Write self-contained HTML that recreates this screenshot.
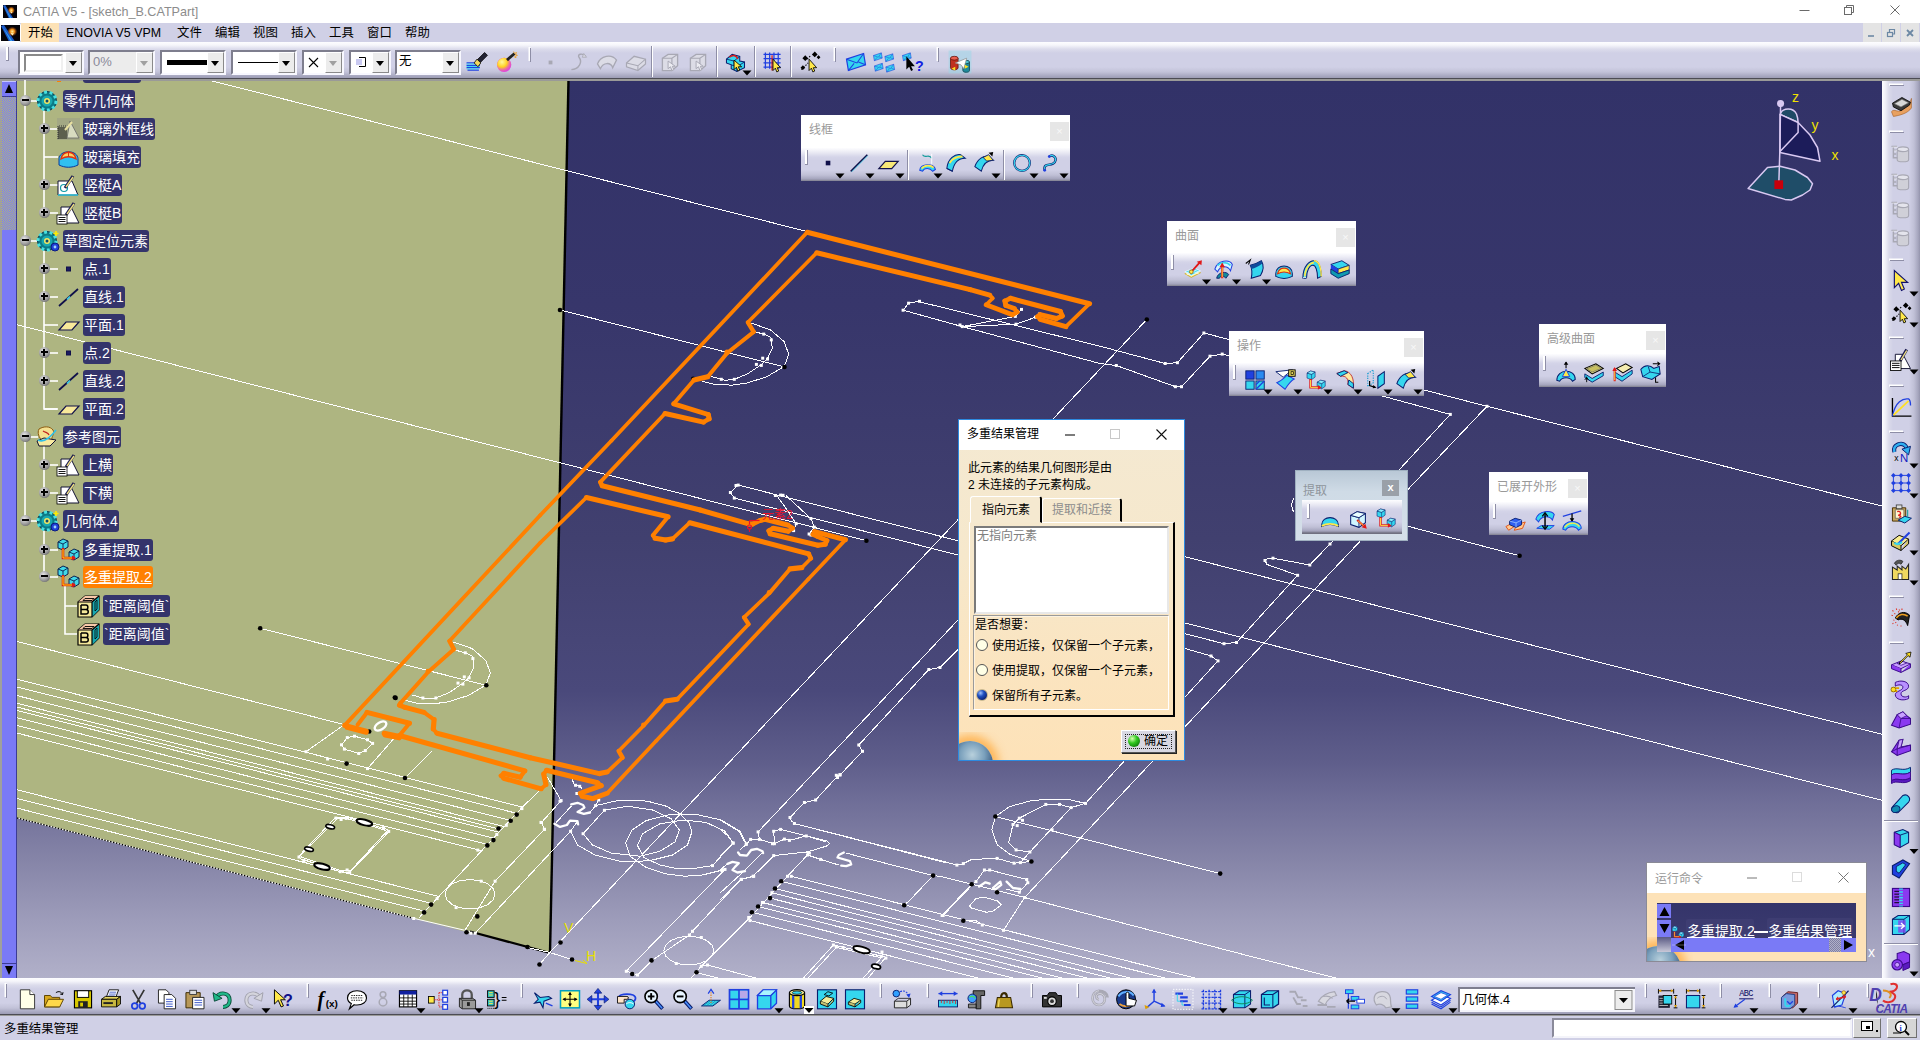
<!DOCTYPE html>
<html lang="zh-CN">
<head>
<meta charset="utf-8">
<title>CATIA V5 - [sketch_B.CATPart]</title>
<style>
*{box-sizing:border-box;margin:0;padding:0}
html,body{width:1920px;height:1040px;overflow:hidden;background:#d0d0e6;font-family:"Liberation Sans","Noto Sans CJK SC",sans-serif;font-size:12px;color:#000}
body{position:relative}
.a{position:absolute}
#titlebar{position:absolute;left:0;top:0;width:1920px;height:23px;background:#fff}
#titlebar .t{position:absolute;left:23px;top:5px;font-size:12.6px;color:#8c8c8c;white-space:nowrap}
#menubar{position:absolute;left:0;top:23px;width:1920px;height:19px;background:#d0d0e6}
#menubar span{position:absolute;top:2px;font-size:12.4px;line-height:17px;color:#000;white-space:nowrap}
#menubar .hl{position:absolute;left:21px;top:0;width:38px;height:19px;background:#fde2b6}
.hbar{position:absolute;left:0;width:1920px;height:38px;background:linear-gradient(#fdfdff 0px,#f6f6fb 3px,#dcdcec 7px,#d0d0e6 11px,#d0d0e6 25px,#c2c2d8 30px,#a8a8c0 34px,#9c9cb4 36px,#4c4c54 36px,#4c4c54 37px,#9a9a98 37px,#9a9a98 38px)}
#toptb{height:39px}
#toptb{top:42px}
#bottb{top:978px}
#viewport{position:absolute;left:17px;top:81px;width:1865px;height:897px;background:linear-gradient(#323268 0%,#37366b 25%,#41406f 51%,#4a497b 68%,#5f5e8b 76%,#6e6d97 80%,#8685a8 87%,#9d9cba 93.5%,#b1b0c9 100%);overflow:hidden}
#lscroll{position:absolute;left:0;top:81px;width:17px;height:897px;background:#7a7af6;border-left:2px solid #a0a09c;border-right:1px solid #3c3c94}
#lscroll .tr{position:absolute;left:0;top:16px;width:14px;height:133px;background:#9498bc;background-image:repeating-conic-gradient(#7a7af6 0% 25%,#aeb581 0% 50%);background-size:2px 2px}
#lscroll .ar{position:absolute;left:3px;width:0;height:0;border-left:4.5px solid transparent;border-right:4.5px solid transparent}
#righttb{position:absolute;left:1882px;top:81px;width:38px;height:897px;background:linear-gradient(90deg,#fdfdff 0px,#f2f2f9 3px,#dadaea 7px,#d0d0e6 11px,#d0d0e6 27px,#c0c0d6 32px,#a6a6be 36px,#9494ac 38px)}
#status{position:absolute;left:0;top:1016px;width:1920px;height:24px;background:#d0d0e6}
#status .s{position:absolute;left:4px;top:3px;font-size:12.4px;color:#000}
#geo{position:absolute;left:0;top:0;width:1920px;height:1040px;pointer-events:none}
.combo{position:absolute;top:50px;height:25px;border:2px solid;border-color:#7e7e8e #f8f8ff #f8f8ff #7e7e8e;background:#fff}
.combo .btn{position:absolute;right:0;top:0;width:17px;height:21px;background:#ececec;border:1px solid;border-color:#fff #8a8a8a #8a8a8a #fff}
.combo .btn:after{content:"";position:absolute;left:3px;top:8px;border-left:4.5px solid transparent;border-right:4.5px solid transparent;border-top:5px solid #000}
.combo.dis{background:#ececec}
.combo.dis .btn:after{border-top-color:#a0a0a0}
.grip{position:absolute;width:3px;background:#fff;border-right:1px solid #8e8ea6;border-bottom:1px solid #8e8ea6}
.sepv{position:absolute;width:2px;border-left:1px solid #8e8ea6;border-right:1px solid #fff}
.dd{position:absolute;width:0;height:0;border-left:4.5px solid transparent;border-right:4.5px solid transparent;border-top:5px solid #000}
/* tree */
.tl{position:absolute;height:22px;line-height:23px;padding:0 1px;font-size:14px;color:#fff;background:#34346b;border-radius:3px;white-space:nowrap;font-family:"Liberation Sans","Noto Sans CJK SC",sans-serif;overflow:hidden}
.tl.sel{background:#ff8000;text-decoration:underline}
.pm{position:absolute;width:11px;height:11px;border-radius:50%;background:radial-gradient(circle at 40% 35%,#e8e8e8 0%,#9a9a9a 55%,#4a4a4a 100%)}
.pm:before{content:"";position:absolute;left:2px;top:4.5px;width:7px;height:2px;background:#000}
.pm.p:after{content:"";position:absolute;left:4.5px;top:2px;width:2px;height:7px;background:#000}
/* floating */
.ft{position:absolute;background:#fff}
.ft .ti{position:absolute;left:8px;top:5px;font-size:12px;color:#999;white-space:nowrap}
.ft .x{position:absolute;width:19px;height:19px;background:#e6e6e6;color:#f8f8f8;font-size:11px;line-height:18px;text-align:center}
.ft .bar{position:absolute;left:0;right:0;bottom:0;height:33px;background:linear-gradient(#fdfdff 0px,#ececf5 4px,#d4d4e8 9px,#d0d0e6 12px,#d0d0e6 22px,#c0c0d6 27px,#a4a4bc 31px,#80808e 33px)}
/* dialog */
#dlg{position:absolute;left:958px;top:419px;width:227px;height:342px;border:1px solid #2d8ae0;background:linear-gradient(#f4e9d2 0%,#f6e8cc 40%,#fbe4bf 75%,#fde2b8 100%);font-size:12px}
#dlg .tb{position:absolute;left:0;top:0;width:225px;height:30px;background:#fff}
#dlg .tb .ti{position:absolute;left:8px;top:6px;font-size:12px;line-height:17px}
#dlg .tx{position:absolute;white-space:nowrap;line-height:17px;font-size:12px}
#dlg .tab1{position:absolute;left:11px;top:76px;width:72px;height:27px;border:1px solid;border-color:#fff #000 transparent #fff;border-right-width:2px;border-radius:3px 3px 0 0;background:#f5e9d0}
#dlg .tab2{position:absolute;left:83px;top:78px;width:80px;height:24px;border:1px solid;border-color:#fff #000 transparent #fff;border-right-width:2px;border-radius:3px 3px 0 0}
#dlg .pan{position:absolute;left:10px;top:102px;width:206px;height:195px;border:1px solid;border-color:#fff #000 #000 #fff;border-right-width:2px;border-bottom-width:2px}
#dlg .lb{position:absolute;left:15px;top:106px;width:195px;height:88px;background:#fff;border:2px solid;border-color:#7a7a7a #e8e8e8 #e8e8e8 #7a7a7a}
#dlg .grp{position:absolute;left:14px;top:195px;width:196px;height:95px;border:1px solid;border-color:#9a9a9a #fff #fff #9a9a9a;box-shadow:inset 1px 1px 0 #fff7}
.rad{position:absolute;width:12px;height:12px;border-radius:50%;background:#ffffe6;border:1px solid #555}
.rad.on{background:radial-gradient(circle at 35% 30%,#9fc0ff 0%,#2050c0 35%,#0a1e70 80%);border-color:#c8b890}
#dlg .ok{position:absolute;left:162px;top:310px;width:55px;height:23px;background:#d8d8e2;border:1px solid;border-color:#fff #555 #555 #fff;box-shadow:1px 1px 0 #222}
#dlg .ok .in{position:absolute;left:3px;top:3px;width:47px;height:15px;border:1px dotted #222}
#dlg .ok .g{position:absolute;left:6px;top:4px;width:12px;height:12px;border-radius:50%;background:radial-gradient(circle at 35% 30%,#d8ffb0 0%,#30c820 40%,#0a6a08 90%)}
#dlg .ok span{position:absolute;left:22px;top:2px;font-size:12px;line-height:17px}
.earth{position:absolute;overflow:hidden}
.earth:before{content:"";position:absolute;left:-12px;top:9px;width:46px;height:46px;border-radius:50%;background:radial-gradient(circle at 55% 30%,#b8d0dc 0%,#7aa0bc 30%,#3a5a80 55%,#1c2c48 80%);box-shadow:0 0 8px 6px #ffa838bb}
/* run cmd */
#run{position:absolute;left:1646px;top:862px;width:221px;height:100px;border:1px solid #8a8a96;background:#fde2b8}
#run .tb{position:absolute;left:0;top:0;width:219px;height:30px;background:#fff}
#run .box{position:absolute;left:10px;top:40px;width:199px;height:49px;background:linear-gradient(#34346a,#3e3d70)}

</style>
</head>
<body>
<div id="titlebar">
<svg class="a" style="left:3px;top:5px" width="14" height="13" viewBox="0 0 16 16" preserveAspectRatio="none"><defs><radialGradient id="cg"><stop offset="0" stop-color="#fff0a0"/><stop offset=".45" stop-color="#f09018"/><stop offset="1" stop-color="#c04808" stop-opacity="0"/></radialGradient></defs><rect width="16" height="16" fill="#050308"/><path d="M0 1L2.500 0L11.500 16H6.500Z" fill="#1a58c8"/><path d="M1 1L9.500 16H8Z" fill="#39a8f0"/><ellipse cx="9.500" cy="6.500" rx="4.200" ry="4.800" fill="url(#cg)"/><path d="M8 8l1.500 2.500l1.500-2z" fill="#fff6c0"/></svg>
<div class="t">CATIA V5 - [sketch_B.CATPart]</div>
<svg class="a" style="left:1780px;top:0" width="140" height="23" viewBox="0 0 140 23"><g stroke="#6a6a6a" stroke-width="1" fill="none"><path d="M19.5 10.5h10"/><rect x="64.500" y="7.500" width="7" height="7"/><path d="M66.500 7.500v-2h7v7h-2"/><path d="M110.500 5.500l9 9M119.500 5.500l-9 9"/></g></svg>
</div>
<div id="menubar">
<div class="hl"></div>
<div class="a" style="left:0;top:0;width:21px;height:19px;background:#fff;border-radius:0 3px 3px 0"></div><svg class="a" style="left:1px;top:2px" width="19" height="16" viewBox="0 0 16 16" preserveAspectRatio="none"><rect width="16" height="16" fill="#050308"/><path d="M0 1L2.500 0L11.500 16H6.500Z" fill="#1a58c8"/><path d="M1 1L9.500 16H8Z" fill="#39a8f0"/><ellipse cx="9.500" cy="6.500" rx="4.200" ry="4.800" fill="url(#cg)"/><path d="M8 8l1.500 2.500l1.500-2z" fill="#fff6c0"/></svg>
<span style="left:28px">开始</span><span style="left:66px">ENOVIA V5 VPM</span><span style="left:177px">文件</span><span style="left:215px">编辑</span><span style="left:253px">视图</span><span style="left:291px">插入</span><span style="left:329px">工具</span><span style="left:367px">窗口</span><span style="left:405px">帮助</span>
<div class="a" style="left:1863px;top:0;width:18px;height:19px;background:#e4e4e4"></div><div class="a" style="left:1882px;top:0;width:18px;height:19px;background:#e4e4e4"></div><div class="a" style="left:1901px;top:0;width:18px;height:19px;background:#e4e4e4"></div>
<svg class="a" style="left:1863px;top:0" width="57" height="19" viewBox="0 0 57 19"><g stroke="#6c88a4" stroke-width="1.6" fill="none"><path d="M5 13h6"/><rect x="24.500" y="9.500" width="5" height="4" stroke-width="1.200"/><path d="M26.500 9v-2.500h5v4.500h-2" stroke-width="1.200"/><path d="M44 7l6 6M50 7l-6 6" stroke-width="1.800"/></g></svg>
</div>
<div id="toptb" class="hbar"></div>
<div class="grip" style="left:6px;top:47px;height:14px"></div>
<div class="combo" style="left:18px;width:66px"><div class="a" style="left:4px;top:2px;width:39px;height:18px;border:2px solid;border-color:#8a8a8a #f0f0f0 #f0f0f0 #8a8a8a"></div><div class="btn"></div></div>
<div class="combo dis" style="left:88px;width:67px"><span class="a" style="left:3px;top:2px;font-size:13px;color:#8a8a9a">0%</span><div class="btn"></div></div>
<div class="combo" style="left:160px;width:66px"><div class="a" style="left:5px;top:8px;width:41px;height:5px;background:#000"></div><div class="btn"></div></div>
<div class="combo" style="left:231px;width:66px"><div class="a" style="left:5px;top:10px;width:41px;height:1px;background:#000"></div><div class="btn"></div></div>
<div class="combo dis" style="left:302px;width:42px;background:#fff"><svg class="a" style="left:4px;top:5px" width="11" height="11"><path d="M1 1l9 9M10 1l-9 9" stroke="#000" stroke-width="1.100"/></svg><div class="btn" style="background:#ececec"></div></div>
<div class="combo" style="left:349px;width:42px"><svg class="a" style="left:4px;top:4px" width="14" height="13"><rect x="1" y="3" width="6" height="6" fill="#c8c8f0"/><path d="M4 1.500h6.500v9h-6.500" fill="none" stroke="#000" stroke-width="1"/></svg><div class="btn"></div></div>
<div class="combo" style="left:395px;width:66px"><span class="a" style="left:2px;top:1px;font-size:12.500px;line-height:17px">无</span><div class="btn"></div></div>
<div id="lscroll"><div class="tr"></div><div class="a" style="left:0;top:0;width:14px;height:1px;background:#c4c4ff"></div><div class="ar" style="top:3px;border-bottom:9px solid #000"></div><div class="ar" style="top:885px;border-top:9px solid #000"></div><div class="a" style="left:0;top:15px;width:14px;height:1px;background:#3c3c94"></div><div class="a" style="left:0;top:882px;width:14px;height:1px;background:#3c3c94"></div></div>
<div id="righttb"></div>
<div id="bottb" class="hbar"></div>
<div id="status"><div class="s">多重结果管理</div>
<div class="a" style="left:1552px;top:2px;width:300px;height:20px;background:#fff;border:2px solid;border-color:#8a8a9a #f4f4fa #f4f4fa #8a8a9a"></div>
<div class="a" style="left:1853px;top:2px;width:28px;height:20px;background:#d6d6d6;border:1px solid;border-color:#fff #707070 #707070 #fff"></div>
<div class="a" style="left:1887px;top:2px;width:30px;height:20px;background:#d6d6d6;border:1px solid;border-color:#fff #707070 #707070 #fff"></div>
</div>

<div id="viewport"></div>
<svg id="geo" viewBox="0 0 1920 1040">
<defs><clipPath id="vp"><rect x="17" y="81" width="1865" height="897"/></clipPath></defs>
<g clip-path="url(#vp)">
<polygon points="17,80 568.5,80 550,953.2 17,818" fill="#aeb581"/>
<path d="M568.5 80L550 953.2" stroke="#000" stroke-width="2.4" fill="none"/>
<path d="M17 818L415.3 918.7" stroke="#fff" stroke-width="1.2" fill="none"/><path d="M17 818L415.3 918.7" stroke="#000" stroke-width="1.4" stroke-dasharray="1.5 1.5" fill="none"/><path d="M415.3 918.7L470 931.5" stroke="#fff" stroke-width="1" fill="none"/><path d="M470 931.5L550 953" stroke="#000" stroke-width="2.2" fill="none"/>
<g fill="#e8e000" font-family="Liberation Sans,sans-serif"><text x="564" y="933" font-size="14">V</text><text x="586" y="961" font-size="14">H</text></g><path d="M575 960.5l12 3l-4 -3.500" stroke="#e8e000" fill="none"/>
<g stroke="#d9c9f2" stroke-width="1.500" stroke-linejoin="round" fill="none"><path d="M1748.1 188.500L1767.500 167.500L1780 166.300L1795 170L1807.500 177.500L1812.500 183.800L1810 190L1802.500 195L1791.300 200L1785 199.400Z" fill="#1f4d68"/><path d="M1780.600 113.100C1783 108 1793 107 1796.500 114C1798 118 1798.100 122.500 1798.100 122.500L1780.300 114.400Z" fill="#1f4a66"/><path d="M1780 114.400L1798.100 122.500L1810 135L1817.500 147.500L1820 161.300L1780 152.500Z" fill="#1c1c5a"/><path d="M1798.100 122.500V132.500L1780 151.500"/><path d="M1780.600 103.500L1779.800 152.500L1778.800 183.800"/></g><circle cx="1780.600" cy="103.500" r="3.500" fill="#d9c9f2"/><rect x="1774.400" y="180.300" width="8.700" height="8.700" fill="#c8000c"/><g fill="#f0e000" font-family="Liberation Sans,sans-serif" font-size="14"><text x="1792" y="102">z</text><text x="1811.500" y="130">y</text><text x="1831.500" y="160">x</text></g>
<text x="1868" y="957" fill="#fff" font-family="Liberation Sans,sans-serif" font-size="14">x</text><path d="M1864 956.500h3" stroke="#fff"/>
<rect x="57" y="80" width="4" height="2" fill="#ff8000"/>
<g stroke="#fff" stroke-width="1" fill="none" shape-rendering="crispEdges"><path d="M208.5 80L807 231.5"/><path d="M560 310L784.5 367"/><path d="M17 324.7L866.4 540.7"/><path d="M1146.8 319.5L549.8 952.5L539.5 964.5"/><path d="M919.5 301.8L1100 346.2L1165.2 363.5L1177.4 362.7L1203.9 333L1487 406.3L1882 506"/><path d="M919.5 301.3L908.6 303.2L903.1 310.2L962.3 326.6L1100 363.5L1116.3 365.5L1175.4 386.7L1181.5 386.7L1210 356.2L1222.2 354.1L1387 397.3L1450.3 414.4L1401.4 467.4L1330 544L1309.8 565L1273 558.2L1268 558L1265 560.5L1267 564.5L1297.6 575.3L1236.5 642.5L1224 643.7L1100 612"/><path d="M962.3 326.6L1015.3 316.4L1021.5 309.4"/><path d="M962.3 326.6L1016 324.2L1035.5 317.2L1039.4 314.1"/><path d="M1487 406.3L1409.6 487.7L1358.7 542.7L1185.5 726.2L1153 760.8L1024.6 897.5L1003.5 930.3"/><path d="M1100 635L1185.5 648.6L1211 656L1218 660.9L1185.5 696.5L1124.4 760.8L1085.5 803.4"/><path d="M1408.4 526.4L1519.6 555.8"/><path d="M1293.5 498L1291.4 505L1293.5 512.2"/><path d="M1000 509.6L1197.8 560L1882 734.3"/><path d="M1000 576L1185.5 623.1L1882 800.3"/><path d="M995.4 816.5L1220.2 873.6"/><path d="M751.2 323.1L770.4 329.8L784.3 341.8L788.7 354.3L784.3 366.3L766.5 376.9L746.3 383.2L731.9 385.1L715.6 384.6L702.1 381.3"/><path d="M753.1 331.3L763.7 334.1L770.9 337.5L772.3 348.1L767.5 358.7L760.8 364.9L747.3 374L734.3 379.3L725.2 380.3L721.3 379.3L710.8 376.4"/><path d="M452.8 641.8L472 648.5L485.9 660.5L490.3 673L485.9 685L468.1 695.6L447.9 701.9L433.5 703.8L417.2 703.3L403.7 700"/><path d="M454.7 650L465.3 652.8L472.5 656.2L473.9 666.8L469.1 677.4L462.4 683.6L448.9 692.7L435.9 698L426.8 699L422.9 698L412.4 695.1"/><path d="M260.2 628.3L486.3 685.3"/><path d="M17 641.5L344.4 724.6"/><path d="M17 679.2L522.4 807.1"/><path d="M17 686.9L516.6 813.3"/><path d="M17 695.6L510.1 820.3"/><path d="M17 703.3L504.2 826.6"/><path d="M17 707.1L501.4 829.6"/><path d="M17 710.4L498.9 832.3"/><path d="M17 717.7L493.3 838.2"/><path d="M17 725.4L487.5 844.4"/><path d="M17 733.1L481.7 850.7"/><path d="M17 789.8L438.9 896.5"/><path d="M17 798.5L432.3 903.6"/><path d="M17 808.1L425 911.3"/><path d="M521.9 807.7L418.9 917.9"/><path d="M495 894.2L493.1 899.8L487.7 904.6L479.6 907.8L470 908.9L460.4 907.8L452.3 904.6L446.9 899.8L445 894.2L446.9 888.6L452.3 883.8L460.4 880.6L470 879.5L479.6 880.6L487.7 883.8L493.1 888.6L495 894.2"/><path d="M335.9 817.2L347.1 817.2L386.9 829.3L388.7 831.9L349.7 872.6L340.2 871.7L300.4 858.7L298.7 856.2L335.9 817.2"/><path d="M337.5 818.3L347.1 818.6L385.8 830.4L386.4 831.9L350.3 870.9L340.2 870.3L302 857.4L300.6 855.6L337.5 818.3"/><path d="M341.5 744.8L347.3 737.6L354.5 736.2L367.5 739.8L372.6 743.4L365.3 750.6L358.8 753.5L344.4 749.1L341.5 744.8"/><path d="M393.5 739L367.5 768.6"/><path d="M432.4 750.6L405 778"/><path d="M344.4 724.6L306 751.7"/><path d="M595.6 805.6L617.5 800.6L630 800L647.5 801.2L666.2 806.2L680 813.8L688.8 822.5L691.9 831.9L687.5 845L672.5 855L652.5 860L635 861.9L620 861.2L595 855L577.5 845L570.6 831.2"/><path d="M583.1 833.8L604.4 810.2L627.5 806.2L652.5 810L671.2 818.8L679.4 830L675 841.9L660 851.2L640 856.2L611.2 853.1L592.5 845L583.1 833.8"/><path d="M746.2 843.8L740 831.2L721.2 820L696.2 814.4L670 814.4L646.2 820.6L631.9 830L625.6 842.5L630 856.2L646.2 867.5L665 873.8L685 876.2L702.5 875L722.5 870"/><path d="M712.5 865.6L733.1 843.1L725 831.2L706.2 822.5L683.8 820L660 823.8L642.5 833.8L637.5 845.6L643.8 857.5L660 865L677.5 868.8L696.2 868.1L712.5 865.6"/><path d="M527 947.4L549.8 952.5L572 959.5"/><path d="M556.2 822.5L571.2 806.2"/><path d="M590 812.5L595.6 805.6L598.8 800"/><path d="M571.9 778.8L574.4 785L580 786.2L582.5 789.4"/><path d="M958 620L758.1 831.9L759.4 839.4L750.6 839.4L746.2 844.4L740 850"/><path d="M958 649.5L940 667.5L928.8 669.5L858.8 745L862.5 751.3L840 775L838.1 775.6L815.6 800L804.4 802.5L790 817.5L791.2 820.6L794.4 823.5L945 862.5"/><path d="M773.8 831.2L780.6 829.4L827.5 841.2L829.4 843.8L826.2 846.2L807.5 851.9L773.8 855.6L753.1 876.2L741.2 879.4L720 900"/><path d="M759.4 839.4L774.4 843.8L773.8 831.2"/><path d="M774.4 843.8L784.4 839.1L789.4 840.4L806.2 836L826.2 841.9"/><path d="M807.5 855L820.6 859.4L838.8 865"/><path d="M807.5 851.2L807.5 855L787.5 876.2"/><path d="M846.2 853.1L933.1 875.6L940 876.3L1024.6 897.5L1260 958.8L1336 978"/><path d="M933.1 875.6L910 900L904.2 905.2"/><path d="M943.1 915.5L975 882"/><path d="M720 820L738.8 831.2L746.2 844.4"/><path d="M720 829.4L727.5 835.6L733.1 843.1L720 856.2"/><path d="M762.5 852.5L741.2 873.8L720 893.1"/><path d="M720 870L727.5 863.8"/><path d="M725 869.4L626.2 971.2L637.5 975"/><path d="M753.8 876.2L741.2 879.4L692.5 931.2L689.4 935L652.5 960L637.5 975"/><path d="M787.5 876.2L748.8 918.8L715 952.5L701.2 966.2L691.2 978.1"/><path d="M791.2 876.2L1195 978"/><path d="M781.2 881.2L1165.2 978"/><path d="M775 888.5L1130.2 978"/><path d="M771.9 892.8L1110.2 978"/><path d="M770 898.1L1087 978"/><path d="M762.5 902.5L1062.1 978"/><path d="M758.1 906.5L1041.9 978"/><path d="M751.9 912.2L1012.8 978"/><path d="M750 920.6L977.7 978"/><path d="M701.2 966.2L707.5 965L756.2 978.1"/><path d="M696.2 972.5L718.8 978.1"/><path d="M713.8 950.6L711.9 956.1L706.5 960.8L698.4 963.9L688.8 965L679.2 963.9L671.1 960.8L665.7 956.1L663.8 950.6L665.7 945.1L671.1 940.4L679.2 937.3L688.8 936.2L698.4 937.3L706.5 940.4L711.9 945.1L713.8 950.6"/><path d="M1031.4 861.5L1024.6 859.4L1009.8 854.1L997.1 844.6L991.8 829.8L995.4 816.5L1009.8 806.5L1033.1 800.2L1066.9 799.1L1085.5 803.4"/><path d="M1029.9 852L1016.1 849.9L1008.7 842.5L1013 824.5L1019.3 818.2L1045.8 804.4L1059.5 804.4L1071.1 807.6L1085.5 803.4"/><path d="M1071.1 807.6L1029.9 852L1020.4 862.6"/><path d="M794.4 823.5L940 860.5L956.9 865.1L963.3 863.6L971.7 859.4L997.1 858.4L1014 863.2L1020.4 862.6L1031.4 861.5"/><path d="M971.7 884.2L942.1 915.5"/><path d="M963.3 920.7L976 920.7L982.3 925"/><path d="M969.6 905.9L976 898.5L983.4 897.1L997.1 900.7L1001.3 904.9L992.9 911.2L986.5 912.3L971.7 908.1L969.6 905.9"/><path d="M976 881.6L984.4 870L989.7 870L1026.7 879.5L1027.8 882.7L1019.3 892.2L1005.6 889"/><path d="M958.5 540.8L738.2 485.1L730.4 492.5L734.3 498.1L958.5 555.2"/><path d="M777.1 496L785.8 508.1L796.2 523.7L793.6 530.6"/><path d="M785.8 495.5L810.9 518.5L814.3 527.1L809.1 534"/><path d="M547.3 776.9L561.1 800.6L541.5 822.5L544.4 829.4L495.1 881.2L464.8 930.6"/><path d="M577.5 821.3L570.6 831.2L475.2 933.2"/><path d="M540.4 789.6L521.9 807.7"/><path d="M803.4 978L833.4 945L885.9 957.2L868.1 978"/><path d="M808.1 978L836.3 947.4L881.3 957.8L863.4 978"/></g>
<g fill="#fff"><rect x="1163.7" y="362" width="3" height="3"/><rect x="1175.9" y="361.2" width="3" height="3"/><rect x="1202.4" y="331.5" width="3" height="3"/><rect x="1485.5" y="404.8" width="3" height="3"/><rect x="1114.8" y="364" width="3" height="3"/><rect x="1173.9" y="385.2" width="3" height="3"/><rect x="1180" y="385.2" width="3" height="3"/><rect x="1208.5" y="354.7" width="3" height="3"/><rect x="1220.7" y="352.6" width="3" height="3"/><rect x="1448.8" y="412.9" width="3" height="3"/><rect x="1328.5" y="542.5" width="3" height="3"/><rect x="1308.3" y="563.5" width="3" height="3"/><rect x="1271.5" y="556.7" width="3" height="3"/><rect x="1263.5" y="559" width="3" height="3"/><rect x="1296.1" y="573.8" width="3" height="3"/><rect x="1235" y="641" width="3" height="3"/><rect x="1222.5" y="642.2" width="3" height="3"/><rect x="918" y="299.8" width="3" height="3"/><rect x="907.1" y="301.7" width="3" height="3"/><rect x="901.6" y="308.7" width="3" height="3"/><rect x="960.8" y="325.1" width="3" height="3"/><rect x="958.5" y="323.5" width="3" height="3"/><rect x="1013.8" y="314.9" width="3" height="3"/><rect x="1020" y="307.9" width="3" height="3"/><rect x="1014.5" y="322.7" width="3" height="3"/><rect x="1034" y="315.7" width="3" height="3"/><rect x="1037.9" y="312.6" width="3" height="3"/><rect x="1209.5" y="654.5" width="3" height="3"/><rect x="1216.5" y="659.4" width="3" height="3"/><rect x="762.2" y="332.6" width="3" height="3"/><rect x="769.8" y="338.4" width="3" height="3"/><rect x="766" y="357.6" width="3" height="3"/><rect x="761.2" y="356.7" width="3" height="3"/><rect x="754.9" y="362.9" width="3" height="3"/><rect x="759.8" y="363.9" width="3" height="3"/><rect x="732.8" y="377.8" width="3" height="3"/><rect x="719.8" y="377.8" width="3" height="3"/><rect x="463.8" y="651.3" width="3" height="3"/><rect x="471.4" y="657.1" width="3" height="3"/><rect x="467.6" y="676.3" width="3" height="3"/><rect x="462.8" y="675.4" width="3" height="3"/><rect x="456.5" y="681.6" width="3" height="3"/><rect x="461.4" y="682.6" width="3" height="3"/><rect x="434.4" y="696.5" width="3" height="3"/><rect x="421.4" y="696.5" width="3" height="3"/><rect x="520.4" y="807.1" width="3" height="3"/><rect x="504.8" y="823.8" width="3" height="3"/><rect x="495.3" y="833" width="3" height="3"/><rect x="476.3" y="848.6" width="3" height="3"/><rect x="435.6" y="897.1" width="3" height="3"/><rect x="412.2" y="917" width="3" height="3"/><rect x="539.5" y="820.9" width="3" height="3"/><rect x="542.9" y="827.8" width="3" height="3"/><rect x="493.6" y="879.7" width="3" height="3"/><rect x="479.7" y="879.7" width="3" height="3"/><rect x="454.6" y="906.1" width="3" height="3"/><rect x="469.4" y="931.7" width="3" height="3"/><rect x="473.7" y="931.7" width="3" height="3"/><rect x="334.4" y="816.6" width="3" height="3"/><rect x="339.6" y="818" width="3" height="3"/><rect x="344.7" y="816.9" width="3" height="3"/><rect x="382" y="826.1" width="3" height="3"/><rect x="387.2" y="829.9" width="3" height="3"/><rect x="348.2" y="871.1" width="3" height="3"/><rect x="345.6" y="868.5" width="3" height="3"/><rect x="338.7" y="870.2" width="3" height="3"/><rect x="302.3" y="859" width="3" height="3"/><rect x="297.5" y="855.5" width="3" height="3"/><rect x="345.8" y="736.1" width="3" height="3"/><rect x="353" y="734.7" width="3" height="3"/><rect x="366" y="738.3" width="3" height="3"/><rect x="371.1" y="741.9" width="3" height="3"/><rect x="363.8" y="749.1" width="3" height="3"/><rect x="357.3" y="752" width="3" height="3"/><rect x="342.9" y="747.6" width="3" height="3"/><rect x="340" y="743.3" width="3" height="3"/><rect x="366" y="767.1" width="3" height="3"/><rect x="304.5" y="750.2" width="3" height="3"/><rect x="326.1" y="757.5" width="3" height="3"/><rect x="594.1" y="804.1" width="3" height="3"/><rect x="569.1" y="829.8" width="3" height="3"/><rect x="581.6" y="832.2" width="3" height="3"/><rect x="602.9" y="808.8" width="3" height="3"/><rect x="744.8" y="842.2" width="3" height="3"/><rect x="721" y="868.5" width="3" height="3"/><rect x="711" y="864.1" width="3" height="3"/><rect x="731.6" y="841.6" width="3" height="3"/><rect x="558.5" y="799.8" width="3" height="3"/><rect x="597.2" y="798.5" width="3" height="3"/><rect x="574.1" y="783.8" width="3" height="3"/><rect x="578.2" y="784.8" width="3" height="3"/><rect x="575.4" y="792" width="3" height="3"/><rect x="756.6" y="830.4" width="3" height="3"/><rect x="757.9" y="837.9" width="3" height="3"/><rect x="749.1" y="837.9" width="3" height="3"/><rect x="744.8" y="842.9" width="3" height="3"/><rect x="938.5" y="666" width="3" height="3"/><rect x="927.3" y="668" width="3" height="3"/><rect x="857.3" y="743.5" width="3" height="3"/><rect x="861" y="749.8" width="3" height="3"/><rect x="838.5" y="773.5" width="3" height="3"/><rect x="834.8" y="773.8" width="3" height="3"/><rect x="838.5" y="773.2" width="3" height="3"/><rect x="836" y="776" width="3" height="3"/><rect x="814.1" y="798.5" width="3" height="3"/><rect x="802.9" y="801" width="3" height="3"/><rect x="788.5" y="816" width="3" height="3"/><rect x="792.9" y="822" width="3" height="3"/><rect x="772.2" y="829.8" width="3" height="3"/><rect x="779.1" y="827.9" width="3" height="3"/><rect x="772.9" y="842.2" width="3" height="3"/><rect x="771" y="842.2" width="3" height="3"/><rect x="782.9" y="837.6" width="3" height="3"/><rect x="787.9" y="838.9" width="3" height="3"/><rect x="804.8" y="834.5" width="3" height="3"/><rect x="772.2" y="854.1" width="3" height="3"/><rect x="751.6" y="874.8" width="3" height="3"/><rect x="739.8" y="877.9" width="3" height="3"/><rect x="806" y="853.5" width="3" height="3"/><rect x="807.9" y="851.6" width="3" height="3"/><rect x="819.1" y="857.9" width="3" height="3"/><rect x="941.6" y="914" width="3" height="3"/><rect x="731.6" y="841.6" width="3" height="3"/><rect x="723.5" y="867.9" width="3" height="3"/><rect x="720.4" y="869.1" width="3" height="3"/><rect x="624.8" y="969.8" width="3" height="3"/><rect x="636" y="973.5" width="3" height="3"/><rect x="752.2" y="874.8" width="3" height="3"/><rect x="739.8" y="877.9" width="3" height="3"/><rect x="691" y="929.8" width="3" height="3"/><rect x="687.9" y="933.5" width="3" height="3"/><rect x="786" y="874.8" width="3" height="3"/><rect x="789.8" y="874.8" width="3" height="3"/><rect x="770.4" y="891.2" width="3" height="3"/><rect x="761" y="901" width="3" height="3"/><rect x="748.5" y="919.1" width="3" height="3"/><rect x="747.2" y="916" width="3" height="3"/><rect x="699.8" y="964.8" width="3" height="3"/><rect x="706" y="963.5" width="3" height="3"/><rect x="699.8" y="936" width="3" height="3"/><rect x="674.8" y="962" width="3" height="3"/><rect x="1084" y="801.9" width="3" height="3"/><rect x="1069.6" y="806.1" width="3" height="3"/><rect x="1058" y="802.9" width="3" height="3"/><rect x="1044.3" y="802.9" width="3" height="3"/><rect x="1017.8" y="816.7" width="3" height="3"/><rect x="1021" y="818.8" width="3" height="3"/><rect x="1011.5" y="823" width="3" height="3"/><rect x="1015.7" y="824.1" width="3" height="3"/><rect x="1028.4" y="850.5" width="3" height="3"/><rect x="1014.6" y="848.4" width="3" height="3"/><rect x="1050.6" y="828.3" width="3" height="3"/><rect x="955.4" y="863.6" width="3" height="3"/><rect x="961.8" y="862.1" width="3" height="3"/><rect x="995.6" y="856.9" width="3" height="3"/><rect x="1012.5" y="861.7" width="3" height="3"/><rect x="1018.9" y="861.1" width="3" height="3"/><rect x="1023.1" y="896" width="3" height="3"/><rect x="1002" y="928.8" width="3" height="3"/><rect x="940.6" y="914" width="3" height="3"/><rect x="980.8" y="923.5" width="3" height="3"/><rect x="974.5" y="880.1" width="3" height="3"/><rect x="982.9" y="868.5" width="3" height="3"/><rect x="988.2" y="868.5" width="3" height="3"/><rect x="1025.2" y="878" width="3" height="3"/><rect x="1026.3" y="881.2" width="3" height="3"/><rect x="1017.8" y="890.7" width="3" height="3"/><rect x="736.7" y="483.6" width="3" height="3"/><rect x="734.5" y="484" width="3" height="3"/><rect x="728.9" y="491" width="3" height="3"/><rect x="732.8" y="496.6" width="3" height="3"/><rect x="779.1" y="493.6" width="3" height="3"/><rect x="773.9" y="494" width="3" height="3"/><rect x="781.5" y="493.8" width="3" height="3"/><rect x="794.7" y="522.2" width="3" height="3"/><rect x="792.1" y="529.1" width="3" height="3"/><rect x="809.4" y="517" width="3" height="3"/><rect x="812.8" y="525.6" width="3" height="3"/><rect x="807.6" y="532.5" width="3" height="3"/><rect x="809.5" y="533.5" width="3" height="3"/><rect x="559.6" y="799.1" width="3" height="3"/><rect x="540" y="821" width="3" height="3"/><rect x="542.9" y="827.9" width="3" height="3"/><rect x="831.9" y="943.5" width="3" height="3"/><rect x="834.8" y="945.5" width="3" height="3"/><rect x="841.5" y="946" width="3" height="3"/><rect x="879.8" y="954.8" width="3" height="3"/><rect x="884.4" y="956.6" width="3" height="3"/><rect x="880.5" y="950.5" width="3" height="3"/></g>
<g stroke="#fff" stroke-width="2.3" fill="none" stroke-linejoin="round" stroke-linecap="round"><path d="M571.2 804.4L577.5 802.8L583.1 805L584.4 807.5L580 810.6L577.5 811.9L583.8 813.8L590 812.5"/><path d="M554.4 823.8L560 826.9L566.9 825L570 820.6L577.5 821.2L578.1 824.4"/><path d="M843.8 852.5L838.8 855L837.5 857.5L850 861.2L851.2 864.4L846.2 866.2L841.2 865.6"/><path d="M738.1 852.5L740 855L746.9 855.6L751.2 850L756.9 848.8L762.5 851.2L763.1 853.1"/><path d="M727.5 863.8L732.5 861.9L738.8 863.1L735 866.9L732.5 870L737.5 872.5L745 871.2"/><path d="M979.1 886.5L985.5 882.3L989.7 883.7"/><path d="M992.9 888L1000.3 881.6L1001.3 884.8L995.4 889.4L992.9 888"/><path d="M1006.6 881.6L1013 888L1020.4 889"/></g>
<ellipse cx="364.4" cy="822.4" rx="8" ry="2.800" transform="rotate(14 364.4 822.4)" fill="#fff" stroke="#000" stroke-width="2"/><ellipse cx="322" cy="866.5" rx="8" ry="2.800" transform="rotate(14 322 866.5)" fill="#fff" stroke="#000" stroke-width="2"/><ellipse cx="330.2" cy="826.7" rx="4.500" ry="2" transform="rotate(14 330.2 826.7)" fill="#fff" stroke="#000" stroke-width="1.600"/><ellipse cx="309" cy="849.2" rx="4.500" ry="2" transform="rotate(14 309 849.2)" fill="#fff" stroke="#000" stroke-width="1.600"/><ellipse cx="380.500" cy="726" rx="6.500" ry="3.600" transform="rotate(-32 380.500 726)" fill="none" stroke="#fff" stroke-width="2.400"/><ellipse cx="861.6" cy="949.7" rx="8.5" ry="3" transform="rotate(14 861.6 949.7)" fill="#fff" stroke="#000" stroke-width="1.800"/><ellipse cx="876.1" cy="966.6" rx="4.5" ry="2.2" transform="rotate(14 876.1 966.6)" fill="#fff" stroke="#000" stroke-width="1.800"/>
<g fill="#000"><circle cx="560" cy="310" r="2.3"/><circle cx="784.5" cy="367" r="2.3"/><circle cx="866.4" cy="540.7" r="2.3"/><circle cx="1146.8" cy="319.5" r="2.3"/><circle cx="1519.6" cy="555.8" r="2.3"/><circle cx="995.4" cy="816.5" r="2.3"/><circle cx="1220.2" cy="873.6" r="2.3"/><circle cx="693.2" cy="378.8" r="2.3"/><circle cx="394.8" cy="697.5" r="2.3"/><circle cx="260.2" cy="628.3" r="2.3"/><circle cx="486.3" cy="685.3" r="2.3"/><circle cx="516.7" cy="814.6" r="2.3"/><circle cx="510.7" cy="820.7" r="2.3"/><circle cx="498.5" cy="828.5" r="2.3"/><circle cx="493.4" cy="840.1" r="2.3"/><circle cx="487.3" cy="845.4" r="2.3"/><circle cx="431.1" cy="904.6" r="2.3"/><circle cx="424.1" cy="912.4" r="2.3"/><circle cx="477.3" cy="916.4" r="2.3"/><circle cx="466.5" cy="932.3" r="2.3"/><circle cx="527.5" cy="947" r="2.3"/><circle cx="346.6" cy="763.6" r="2.3"/><circle cx="405" cy="778" r="2.3"/><circle cx="369.2" cy="731.5" r="2.3"/><circle cx="395.6" cy="697.9" r="2.3"/><circle cx="560.5" cy="942.5" r="2.3"/><circle cx="539.5" cy="964.5" r="2.3"/><circle cx="572" cy="959.5" r="2.3"/><circle cx="933.1" cy="875.6" r="2.3"/><circle cx="904.2" cy="905.2" r="2.3"/><circle cx="781.2" cy="881.2" r="2.3"/><circle cx="775" cy="888.5" r="2.3"/><circle cx="770" cy="898.1" r="2.3"/><circle cx="758.1" cy="906.5" r="2.3"/><circle cx="751.9" cy="912.2" r="2.3"/><circle cx="651.5" cy="960.4" r="2.3"/><circle cx="632.2" cy="974" r="2.3"/><circle cx="696.5" cy="972.2" r="2.3"/><circle cx="1031.4" cy="861.5" r="2.3"/><circle cx="971.7" cy="884.2" r="2.3"/><circle cx="997.1" cy="892.2" r="2.3"/><circle cx="963.3" cy="920.7" r="2.3"/></g>
<g stroke="#ff8000" stroke-linecap="round" fill="none" transform="translate(0.2,0.8)"><path d="M344.4 724.6L540 514.5" stroke-width="3.81"/><path d="M540 514.5L611.2 440" stroke-width="3.76"/><path d="M611.2 440L807 231.5" stroke-width="3.79"/><path d="M807 231.5L1089.4 302.9" stroke-width="5.04"/><path d="M1089.4 302.9L1065.7 325.9" stroke-width="3.73"/><path d="M1065.7 325.9L1040 318.5" stroke-width="5.00"/><path d="M1040 318.5L1037 315.8" stroke-width="3.87"/><path d="M1037 315.8L1040 313.8" stroke-width="4.33"/><path d="M1040 313.8L1056.2 317.7" stroke-width="5.06"/><path d="M1056.2 317.7L1062.2 315.2" stroke-width="4.80"/><path d="M1062.2 315.2L1060.2 310.7" stroke-width="4.75"/><path d="M1060.2 310.7L1010.2 297.5" stroke-width="5.03"/><path d="M1010.2 297.5L1004.7 300.2" stroke-width="4.67"/><path d="M1004.7 300.2L1005.7 304.7" stroke-width="5.08"/><path d="M1005.7 304.7L1014.2 307.7" stroke-width="4.90"/><path d="M1014.2 307.7L1017.2 311.2" stroke-width="3.95"/><path d="M1017.2 311.2L1012.2 314" stroke-width="4.54"/><path d="M1012.2 314L986 304" stroke-width="4.86"/><path d="M986 304L992.5 297.5" stroke-width="3.68"/><path d="M992.5 297.5L989.5 294.3" stroke-width="3.79"/><path d="M989.5 294.3L970 288.8" stroke-width="5.00"/><path d="M970 288.8L816.5 252" stroke-width="5.06"/><path d="M816.5 252L747.7 321.5" stroke-width="3.70"/><path d="M747.7 321.5L753.5 331" stroke-width="4.44"/><path d="M753.5 331L727 352.2" stroke-width="4.06"/><path d="M727 352.2L707.5 376" stroke-width="4.02"/><path d="M707.5 376L693.8 379.2" stroke-width="5.06"/><path d="M693.8 379.2L673.5 403" stroke-width="3.96"/><path d="M673.5 403L708 413.7" stroke-width="4.97"/><path d="M708 413.7L709 418" stroke-width="5.06"/><path d="M709 418L703.3 421.3" stroke-width="4.50"/><path d="M703.3 421.3L664.8 412.7" stroke-width="5.07"/><path d="M664.8 412.7L600.1 481.3" stroke-width="3.78"/><path d="M600.1 481.3L602 485" stroke-width="4.63"/><path d="M602 485L700 509.2" stroke-width="5.05"/><path d="M700 509.2L748.4 523.1" stroke-width="5.00"/><path d="M748.4 523.1L752.3 523.3" stroke-width="5.19"/><path d="M752.3 523.3L760 519.6" stroke-width="4.69"/><path d="M760 519.6L765 518.5" stroke-width="5.08"/><path d="M765 518.5L787.6 524.2" stroke-width="5.04"/><path d="M787.6 524.2L792.6 527.4" stroke-width="4.38"/><path d="M792.6 527.4L788 530.5" stroke-width="4.31"/><path d="M788 530.5L773 527.5" stroke-width="5.10"/><path d="M773 527.5L768.5 530" stroke-width="4.55"/><path d="M768.5 530L770 533" stroke-width="4.65"/><path d="M770 533L817.7 544.4" stroke-width="5.06"/><path d="M817.7 544.4L825 543.5" stroke-width="5.16"/><path d="M825 543.5L826.8 539.8" stroke-width="4.68"/><path d="M826.8 539.8L817.6 535.8" stroke-width="4.77"/><path d="M817.6 535.8L812.6 533.6" stroke-width="4.76"/><path d="M812.6 533.6L814.4 530.8" stroke-width="4.37"/><path d="M814.4 530.8L845.3 538.9" stroke-width="5.03"/><path d="M845.3 538.9L808 578.5" stroke-width="3.79"/><path d="M808 578.5L656.1 739.9" stroke-width="3.79"/><path d="M656.1 739.9L607 792.5" stroke-width="3.80"/><path d="M607 792.5L592.5 797.8" stroke-width="4.88"/><path d="M592.5 797.8L582 795.4" stroke-width="5.07"/><path d="M582 795.4L580 792.5" stroke-width="4.28"/><path d="M580 792.5L601.2 784.8" stroke-width="4.89"/><path d="M601.2 784.8L597.3 781.9" stroke-width="4.17"/><path d="M597.3 781.9L546.3 769.4" stroke-width="5.05"/><path d="M546.3 769.4L543.5 773.3" stroke-width="4.22"/><path d="M543.5 773.3L545.8 783.8" stroke-width="5.08"/><path d="M545.8 783.8L541 788" stroke-width="3.91"/><path d="M541 788L503.5 777.5" stroke-width="5.01"/><path d="M503.5 777.5L500.5 775" stroke-width="3.99"/><path d="M500.5 775L503.5 772.5" stroke-width="3.99"/><path d="M503.5 772.5L520 776.4" stroke-width="5.06"/><path d="M520 776.4L524.7 770" stroke-width="4.19"/><path d="M524.7 770L399.2 734.7" stroke-width="5.01"/><path d="M399.2 734.7L409.3 722.5" stroke-width="4.01"/><path d="M409.3 722.5L366.8 711.6" stroke-width="5.04"/><path d="M366.8 711.6L357.4 723.9" stroke-width="4.13"/><path d="M344.4 724.6L366 730.4" stroke-width="5.02"/><path d="M347 726.5L366 731.5" stroke-width="5.03"/><path d="M384 732.5L399.2 735.7" stroke-width="5.09"/><path d="M385 734.3L399 737" stroke-width="5.11"/><path d="M586.2 496.7L540 542" stroke-width="3.71"/><path d="M540 542L449.3 640.2" stroke-width="3.82"/><path d="M449.3 640.2L453.6 648.4" stroke-width="4.61"/><path d="M453.6 648.4L428 671.2" stroke-width="3.88"/><path d="M428 671.2L400.3 702.3" stroke-width="3.88"/><path d="M400.3 702.3L399.2 704.4" stroke-width="4.61"/><path d="M399.2 704.4L405 706.6" stroke-width="4.86"/><path d="M405 706.6L423.8 711.6" stroke-width="5.03"/><path d="M423.8 711.6L433.9 718.8" stroke-width="4.23"/><path d="M433.9 718.8L433.1 728.2" stroke-width="5.18"/><path d="M433.1 728.2L436.7 732.5" stroke-width="3.99"/><path d="M436.7 732.5L530 756.9" stroke-width="5.03"/><path d="M530 756.9L599.2 772.8" stroke-width="5.07"/><path d="M599.2 772.8L606.9 771.3" stroke-width="5.10"/><path d="M606.9 771.3L622.3 756.9" stroke-width="3.80"/><path d="M622.3 756.9L618.5 750.2" stroke-width="4.52"/><path d="M618.5 750.2L643.4 724.9" stroke-width="3.71"/><path d="M643.4 724.9L665.4 700.2" stroke-width="3.88"/><path d="M665.4 700.2L676.9 698.4" stroke-width="5.14"/><path d="M676.9 698.4L748.4 623.4" stroke-width="3.76"/><path d="M748.4 623.4L743.8 616.5" stroke-width="4.33"/><path d="M743.8 616.5L769.2 592.3" stroke-width="3.76"/><path d="M769.2 592.3L790 568" stroke-width="3.95"/><path d="M790 568L801.5 566.9" stroke-width="5.18"/><path d="M801.5 566.9L810.7 557.7" stroke-width="3.68"/><path d="M810.7 557.7L808.4 553.1" stroke-width="4.65"/><path d="M808.4 553.1L689.6 521.9" stroke-width="5.03"/><path d="M689.6 521.9L672.3 538.1" stroke-width="3.80"/><path d="M672.3 538.1L665.4 539.2" stroke-width="5.14"/><path d="M665.4 539.2L655 537.5" stroke-width="5.13"/><path d="M655 537.5L652.7 534.6" stroke-width="4.07"/><path d="M652.7 534.6L667.9 516" stroke-width="4.03"/><path d="M667.9 516L586.2 496.7" stroke-width="5.06"/></g>
<g fill="#ff8000"><circle cx="727" cy="352.2" r="2.6"/><circle cx="428" cy="671.2" r="2.4"/><circle cx="769.2" cy="592.3" r="2.4"/><circle cx="643.4" cy="724.9" r="2.4"/></g>
<g fill="#e8102a" stroke="none"><text x="762" y="519" font-size="12" font-family="Liberation Sans,Noto Sans CJK SC,sans-serif">元素2</text></g><g stroke="#e8102a" stroke-width="1.200" fill="none"><path d="M749.5 520.500h10"/><path d="M749.500 520.500v4"/><circle cx="749.500" cy="527" r="2"/><path d="M749.500 529v3"/></g>
</g>
</svg>
<svg class="a" style="left:0;top:0;pointer-events:none" width="330" height="700" viewBox="0 0 330 700"><g stroke="#fff" stroke-width="1.6" fill="none"><path d="M25 80V521"/><path d="M44 108V213M44 248V409H57M44 444V493M44 528V577"/><path d="M65 586V634H77M65 606H77"/><path d="M25 101H38"/><path d="M44 129H58"/><path d="M44 157H58"/><path d="M44 185H58"/><path d="M44 213H58"/><path d="M25 241H38"/><path d="M44 269H58"/><path d="M44 297H58"/><path d="M44 325H58"/><path d="M44 353H58"/><path d="M44 381H58"/><path d="M44 409H58"/><path d="M25 437H38"/><path d="M44 465H58"/><path d="M44 493H58"/><path d="M25 521H38"/><path d="M44 550H58"/><path d="M44 577H58"/></g><g transform="translate(47,101)"><circle r="9.5" fill="#0c7a86" stroke="#063a52" stroke-width="1"/><circle r="9" fill="none" stroke="#49e0e0" stroke-width="3" stroke-dasharray="3 2.6"/><circle r="5.5" fill="#1aa8b0"/><circle r="3" fill="#f4e860"/><circle r="1.5" fill="#0b4a70"/></g><g transform="translate(57,118)"><rect x="0" y="0" width="23" height="22" fill="#a3a884"/><path d="M1 21L1 8L15 8" stroke="#333" stroke-width="1" stroke-dasharray="1 1" fill="none"/><rect x="1" y="9" width="9" height="12" fill="#222" opacity=".55"/><path d="M13 3L22 20L10 20Z" fill="#d8dcc0" stroke="#666" stroke-width=".8"/><path d="M8 12L15 4" stroke="#e8e0a0" stroke-width="2"/></g><g transform="translate(58,146)"><path d="M1 14C0 3 21 3 20 14L20 19C14 22 7 22 1 19Z" fill="#30c0f0" stroke="#0a3a9a" stroke-width="1"/><path d="M3 13C5 4 16 4 18 13C13 10 8 10 3 13Z" fill="#ffd060" stroke="#e03010" stroke-width="1.300"/><path d="M10.500 5V11" stroke="#e03010" stroke-width="1"/></g><g transform="translate(57,174)"><path d="M1 7H15L21 21H1Z" fill="#fff" stroke="#113" stroke-width="1"/><path d="M1 21H21" stroke="#30c8e0" stroke-width="1.5"/><circle cx="7" cy="14" r="3.5" fill="none" stroke="#109aa8" stroke-width="1.2"/><path d="M8 14L16 2" stroke="#1a1a50" stroke-width="3"/><path d="M9 13L16 3" stroke="#f0e080" stroke-width="1.4"/></g><g transform="translate(57,202)"><path d="M4 5H14L22 21H4Z" fill="#fff" stroke="#113" stroke-width="1"/><path d="M9 13L17 1" stroke="#1a1a50" stroke-width="3"/><path d="M10 12L17 2" stroke="#f0e080" stroke-width="1.4"/><rect x="0" y="13" width="10" height="9" fill="#fff" stroke="#000" stroke-width=".8"/><path d="M1.500 15.500h7M1.500 17.500h7M1.500 19.500h7" stroke="#000" stroke-width=".9"/></g><g transform="translate(47,241)"><circle r="9.5" fill="#0c7a86" stroke="#063a52" stroke-width="1"/><circle r="9" fill="none" stroke="#49e0e0" stroke-width="3" stroke-dasharray="3 2.6"/><circle r="5.5" fill="#1aa8b0"/><circle r="3" fill="#f4e860"/><circle r="1.5" fill="#0b4a70"/><circle cx="8" cy="6" r="4" fill="#2040d8" stroke="#0a1a80"/><circle cx="8" cy="6" r="1.4" fill="#9fd0ff"/><path d="M9 -10v5M6.500 -7.500h5" stroke="#ffee00" stroke-width="1.600"/></g><rect x="66" y="266.5" width="5" height="5" fill="#10104a"/><rect x="67" y="267.5" width="3" height="3" fill="#1a1a60"/><path d="M59 306L78 289" stroke="#10104a" stroke-width="1.700"/><path d="M67 299.5l3 -3" stroke="#3ad0e8" stroke-width="1.700"/><path d="M59 330L66 322L79 322L72 330Z" fill="#f8e89a" stroke="#10104a" stroke-width="1.200"/><rect x="66" y="350.5" width="5" height="5" fill="#10104a"/><rect x="67" y="351.5" width="3" height="3" fill="#1a1a60"/><path d="M59 390L78 373" stroke="#10104a" stroke-width="1.700"/><path d="M67 383.5l3 -3" stroke="#3ad0e8" stroke-width="1.700"/><path d="M59 414L66 406L79 406L72 414Z" fill="#f8e89a" stroke="#10104a" stroke-width="1.200"/><g transform="translate(36,426)"><path d="M3 3C8 0 14 0 17 4C19 8 15 11 16 14L6 15C3 11 1 7 3 3Z" fill="#f4e090" stroke="#8a5a10" stroke-width="1"/><path d="M7 5C10 7 12 6 13 9" stroke="#c02020" stroke-width="1.200" fill="none"/><path d="M1 15L8 12L20 14L14 20L3 20Z" fill="#f8eaa0" stroke="#113" stroke-width="1"/><path d="M2 14C8 17 14 12 20 4" stroke="#30c0e8" stroke-width="1.600" fill="none"/></g><g transform="translate(57,454)"><path d="M4 5H14L22 21H4Z" fill="#fff" stroke="#113" stroke-width="1"/><path d="M9 13L17 1" stroke="#1a1a50" stroke-width="3"/><path d="M10 12L17 2" stroke="#f0e080" stroke-width="1.4"/><rect x="0" y="13" width="10" height="9" fill="#fff" stroke="#000" stroke-width=".8"/><path d="M1.500 15.500h7M1.500 17.500h7M1.500 19.500h7" stroke="#000" stroke-width=".9"/></g><g transform="translate(57,482)"><path d="M4 5H14L22 21H4Z" fill="#fff" stroke="#113" stroke-width="1"/><path d="M9 13L17 1" stroke="#1a1a50" stroke-width="3"/><path d="M10 12L17 2" stroke="#f0e080" stroke-width="1.4"/><rect x="0" y="13" width="10" height="9" fill="#fff" stroke="#000" stroke-width=".8"/><path d="M1.500 15.500h7M1.500 17.500h7M1.500 19.500h7" stroke="#000" stroke-width=".9"/></g><g transform="translate(47,521)"><circle r="9.5" fill="#0c7a86" stroke="#063a52" stroke-width="1"/><circle r="9" fill="none" stroke="#49e0e0" stroke-width="3" stroke-dasharray="3 2.6"/><circle r="5.5" fill="#1aa8b0"/><circle r="3" fill="#f4e860"/><circle r="1.5" fill="#0b4a70"/><circle cx="8" cy="6" r="4" fill="#2040d8" stroke="#0a1a80"/><circle cx="8" cy="6" r="1.4" fill="#9fd0ff"/><path d="M9 -10v5M6.500 -7.500h5" stroke="#ffee00" stroke-width="1.600"/></g><g transform="translate(57,538)"><path d="M1 4L6 1L11 3L11 9L6 12L1 10Z" fill="#40d8e8" stroke="#0a2050" stroke-width="1"/><path d="M1 4L6 6L11 3M6 6V12" stroke="#0a2050" stroke-width=".9" fill="none"/><path d="M12 14L17 11L22 13L22 19L17 22L12 20Z" fill="#40d8e8" stroke="#0a2050" stroke-width="1"/><path d="M12 14L17 16L22 13M17 16V22" stroke="#0a2050" stroke-width=".9" fill="none"/><path d="M6 10V20H18" stroke="#e01818" stroke-width="2.600" fill="none"/><path d="M6 11V20H17" stroke="#ffe000" stroke-width="1" fill="none"/><path d="M15 17.500l4 2.500l-4 2.500z" fill="#e01818"/></g><g transform="translate(57,565)"><path d="M1 4L6 1L11 3L11 9L6 12L1 10Z" fill="#40d8e8" stroke="#0a2050" stroke-width="1"/><path d="M1 4L6 6L11 3M6 6V12" stroke="#0a2050" stroke-width=".9" fill="none"/><path d="M12 14L17 11L22 13L22 19L17 22L12 20Z" fill="#40d8e8" stroke="#0a2050" stroke-width="1"/><path d="M12 14L17 16L22 13M17 16V22" stroke="#0a2050" stroke-width=".9" fill="none"/><path d="M6 10V20H18" stroke="#e01818" stroke-width="2.600" fill="none"/><path d="M6 11V20H17" stroke="#ffe000" stroke-width="1" fill="none"/><path d="M15 17.500l4 2.500l-4 2.500z" fill="#e01818"/></g><g transform="translate(77,594)"><path d="M1 8L8 2L22 2L22 16L15 23L1 23Z" fill="#f4e89a" stroke="#000" stroke-width="1.200"/><path d="M1 8L8 2L22 2L15 8Z" fill="#f8c8a8"/><path d="M15 8L22 2L22 16L15 23Z" fill="#1aa8b0"/><path d="M1 8H15V23M15 8L22 2" stroke="#000" stroke-width="1.200" fill="none"/><path d="M8 4.500h9l-2 2h-9z" fill="none" stroke="#000" stroke-width=".9"/><path d="M4 11V20H9C12 20 12 15.500 9 15.500H4M9 15.500C11.500 15.500 11.500 11 9 11H4" stroke="#000" stroke-width="1.500" fill="none"/><path d="M18 8v9l2-2v-9z" fill="none" stroke="#000" stroke-width=".8"/></g><g transform="translate(77,622)"><path d="M1 8L8 2L22 2L22 16L15 23L1 23Z" fill="#f4e89a" stroke="#000" stroke-width="1.200"/><path d="M1 8L8 2L22 2L15 8Z" fill="#f8c8a8"/><path d="M15 8L22 2L22 16L15 23Z" fill="#1aa8b0"/><path d="M1 8H15V23M15 8L22 2" stroke="#000" stroke-width="1.200" fill="none"/><path d="M8 4.500h9l-2 2h-9z" fill="none" stroke="#000" stroke-width=".9"/><path d="M4 11V20H9C12 20 12 15.500 9 15.500H4M9 15.500C11.500 15.500 11.500 11 9 11H4" stroke="#000" stroke-width="1.500" fill="none"/><path d="M18 8v9l2-2v-9z" fill="none" stroke="#000" stroke-width=".8"/></g></svg>
<div class="pm" style="left:19.5px;top:94.5px"></div>
<div class="tl" style="left:63px;top:90px">零件几何体</div>
<div class="pm p" style="left:38.5px;top:122.5px"></div>
<div class="tl" style="left:83px;top:118px">玻璃外框线</div>
<div class="tl" style="left:83px;top:146px">玻璃填充</div>
<div class="pm p" style="left:38.5px;top:178.5px"></div>
<div class="tl" style="left:83px;top:174px">竖梃A</div>
<div class="pm p" style="left:38.5px;top:206.5px"></div>
<div class="tl" style="left:83px;top:202px">竖梃B</div>
<div class="pm" style="left:19.5px;top:234.5px"></div>
<div class="tl" style="left:63px;top:230px">草图定位元素</div>
<div class="pm p" style="left:38.5px;top:262.5px"></div>
<div class="tl" style="left:83px;top:258px">点.1</div>
<div class="pm p" style="left:38.5px;top:290.5px"></div>
<div class="tl" style="left:83px;top:286px">直线.1</div>
<div class="tl" style="left:83px;top:314px">平面.1</div>
<div class="pm p" style="left:38.5px;top:346.5px"></div>
<div class="tl" style="left:83px;top:342px">点.2</div>
<div class="pm p" style="left:38.5px;top:374.5px"></div>
<div class="tl" style="left:83px;top:370px">直线.2</div>
<div class="tl" style="left:83px;top:398px">平面.2</div>
<div class="pm" style="left:19.5px;top:430.5px"></div>
<div class="tl" style="left:63px;top:426px">参考图元</div>
<div class="pm p" style="left:38.5px;top:458.5px"></div>
<div class="tl" style="left:83px;top:454px">上横</div>
<div class="pm p" style="left:38.5px;top:486.5px"></div>
<div class="tl" style="left:83px;top:482px">下横</div>
<div class="pm" style="left:19.5px;top:514.5px"></div>
<div class="tl" style="left:63px;top:510px">几何体.4</div>
<div class="pm p" style="left:38.5px;top:543.5px"></div>
<div class="tl" style="left:83px;top:539px">多重提取.1</div>
<div class="pm" style="left:38.5px;top:570.5px"></div>
<div class="tl sel" style="left:83px;top:566px">多重提取.2</div>
<div class="tl" style="left:103px;top:595px">`距离阈值`</div>
<div class="tl" style="left:103px;top:623px">`距离阈值`</div>
<div class="tl" style="left:83px;top:62px;width:58px;height:21px;clip-path:inset(18px 0 0 0)"></div>
<div id="dlg">
<div class="tb"><div class="ti">多重结果管理</div>
<svg class="a" style="left:100px;top:0" width="125" height="30" viewBox="0 0 125 30"><g stroke="#111" stroke-width="1.100" fill="none"><path d="M6 15h10"/><path d="M97.500 9.500l10 10M107.500 9.500l-10 10"/></g><rect x="51.500" y="9.500" width="9" height="9" fill="none" stroke="#c8c8c8"/></svg></div>
<div class="tx" style="left:9px;top:40px">此元素的结果几何图形是由</div>
<div class="tx" style="left:9px;top:57px">2 未连接的子元素构成。</div>
<div class="pan"></div>
<div class="tab2"><div class="tx" style="left:9px;top:3px;color:#8c8c8c">提取和近接</div></div>
<div class="tab1"><div class="tx" style="left:11px;top:5px">指向元素</div></div>
<div class="lb"><div class="tx" style="left:1px;top:0px;color:#808080">无指向元素</div></div>
<div class="grp"></div>
<div class="tx" style="left:16px;top:197px">是否想要：</div>
<div class="rad" style="left:17px;top:219px"></div><div class="tx" style="left:33px;top:218px">使用近接，仅保留一个子元素，</div>
<div class="rad" style="left:17px;top:244px"></div><div class="tx" style="left:33px;top:243px">使用提取，仅保留一个子元素，</div>
<div class="rad on" style="left:17px;top:269px"></div><div class="tx" style="left:33px;top:268px">保留所有子元素。</div>
<div class="earth" style="left:0;top:312px;width:60px;height:28px"></div>
<div class="ok"><div class="in"></div><div class="g"></div><span>确定</span></div>
</div>
<div class="ft" style="left:801px;top:115px;width:269px;height:66px"><div class="ti">线框</div><div class="x" style="left:249px;top:7px">×</div><div class="bar"></div><div class="grip" style="left:4px;top:35px;height:15px"></div><svg class="a" style="left:0;top:0" width="269" height="66" viewBox="801 115 269 66"><g transform="translate(817.0,152.0) scale(0.92)"><rect x="9.500" y="9.500" width="5" height="5" fill="#10104a"/></g><g transform="translate(848.0,152.0) scale(0.92)"><path d="M3 21L21 3" stroke="#10104a" stroke-width="1.800"/><path d="M4 21.500L21.500 4" stroke="#35d6ee" stroke-width=".8"/></g><g transform="translate(877.0,153.0) scale(0.92)"><path d="M2 17L9 9H23L16 17Z" fill="#f8e878" stroke="#10104a" stroke-width="1.300"/></g><g transform="translate(917.0,151.0) scale(0.92)"><path d="M6 4C9 9 13 2 16 8" stroke="#109a9a" stroke-width="1.200" fill="none"/><path d="M16 3V14" stroke="#fff" stroke-width="1"/><path d="M3 21C3 13 19 13 20 20L17 22C14 18 8 18 6 22Z" fill="#35d6ee" stroke="#2040e0" stroke-width="1.100"/><path d="M5 19C8 15 15 15 18 18" stroke="#ffe84a" stroke-width="1.800" fill="none"/></g><g transform="translate(945.0,151.0) scale(0.92)"><path d="M2 19C3 8 11 3 17 4L22 8C16 8 10 12 8 22Z" fill="#35d6ee" stroke="#0a1e6e" stroke-width="1.100"/><path d="M2 19L8 22" stroke="#0a1e6e"/><path d="M5 13C8 8 13 6 19 6" stroke="#ffe84a" stroke-width="2" fill="none"/></g><g transform="translate(973.0,151.0) scale(0.92)"><path d="M2 17C5 8 12 5 16 6L22 10C16 10 11 14 9 22Z" fill="#35d6ee" stroke="#0a1e6e" stroke-width="1.100"/><path d="M11 7L17 4L22 10L15 11Z" fill="#ffe84a" stroke="#0a1e6e" stroke-width="1"/><path d="M17 2L22 1L21 6Z" fill="#000"/></g><g transform="translate(1011.0,152.0) scale(0.92)"><circle cx="12" cy="12" r="8.500" fill="none" stroke="#0a1e6e" stroke-width="2.400"/><circle cx="12" cy="12" r="8.500" fill="none" stroke="#35d6ee" stroke-width="1.200"/></g><g transform="translate(1041.0,151.0) scale(0.92)"><path d="M4 21C2 12 12 17 15 12C18 7 12 3 9 6" fill="none" stroke="#0a1e6e" stroke-width="2.600"/><path d="M4 21C2 12 12 17 15 12C18 7 12 3 9 6" fill="none" stroke="#35d6ee" stroke-width="1.200"/><circle cx="4" cy="21" r="1.500" fill="#2040e0"/><circle cx="9" cy="6" r="1.500" fill="#2040e0"/></g><path d="M835.5 173.5h9l-4.500 5z" fill="#000"/><path d="M865.5 173.5h9l-4.500 5z" fill="#000"/><path d="M895.5 173.5h9l-4.500 5z" fill="#000"/><path d="M933.5 173.5h9l-4.500 5z" fill="#000"/><path d="M991.5 173.5h9l-4.500 5z" fill="#000"/><path d="M1029.5 173.5h9l-4.500 5z" fill="#000"/><path d="M1059.5 173.5h9l-4.500 5z" fill="#000"/><path d="M907.5 150V180" stroke="#8e8ea6"/><path d="M908.5 150V180" stroke="#fff"/><path d="M1003.5 150V180" stroke="#8e8ea6"/><path d="M1004.5 150V180" stroke="#fff"/></svg></div>
<div class="ft" style="left:1167px;top:221px;width:189px;height:65px"><div class="ti">曲面</div><div class="x" style="left:169px;top:7px">×</div><div class="bar"></div><div class="grip" style="left:4px;top:34px;height:15px"></div><svg class="a" style="left:0;top:0" width="189" height="65" viewBox="1167 221 189 65"><g transform="translate(1183.0,258.0) scale(0.92)"><path d="M2 17L12 13L19 16L9 21Z" fill="#fff7a0" stroke="#c8a000" stroke-width=".8"/><path d="M2 15L12 11L19 14L9 19Z" fill="#35d6ee" stroke="#fff" stroke-width=".8"/><path d="M3 16.500L12 13L18 15.500M4 18L12 15L17 17" stroke="#fff" stroke-width=".8" fill="none"/><path d="M9 15L19 4" stroke="#e01818" stroke-width="2"/><path d="M20.500 2.500L20 8L15 4Z" fill="#e01818"/><circle cx="9" cy="15" r="2" fill="#ffe84a" stroke="#a06000" stroke-width=".8"/></g><g transform="translate(1213.0,258.0) scale(0.92)"><path d="M2 12C5 2 18 1 21 7L19 14C16 8 8 8 5 15Z" fill="#d8f4ff" stroke="#2040e0" stroke-width="1.100"/><path d="M5 8C9 4 15 4 19 8" stroke="#35d6ee" stroke-width="2" fill="none"/><path d="M4 22C5 15 15 14 17 18L14 22C12 19 8 19 7 22Z" fill="#108a9a" stroke="#0a1e6e" stroke-width="1"/><path d="M10 22V8" stroke="#e01818" stroke-width="2.400"/><path d="M10 21V9" stroke="#ffe84a" stroke-width="1"/><path d="M7 10L10 5L13 10Z" fill="#e01818"/></g><g transform="translate(1243.0,258.0) scale(0.92)"><path d="M3 6L8 2L6 7" stroke="#000" stroke-width="1.100" fill="none"/><path d="M8 8C12 7 17 5 20 3C23 8 22 14 19 19L9 22C10 17 10 12 8 8Z" fill="#35d6ee" stroke="#0a1e6e" stroke-width="1.100"/><path d="M8 8C12 7 17 5 20 3L21 6C17 9 13 11 9 12Z" fill="#104a9a"/></g><g transform="translate(1273.0,258.0) scale(0.92)"><path d="M3 17C3 6 21 6 21 17L21 20C15 23 9 23 3 20Z" fill="#35d6ee" stroke="#0a1e6e" stroke-width="1.100"/><path d="M5 17C7 9 17 9 19 17C14 14.500 10 14.500 5 17Z" fill="#ffe84a" stroke="#e03010" stroke-width="1.200"/></g><g transform="translate(1301.0,258.0) scale(0.92)"><path d="M2 22C2 8 10 3 14 3C20 3 22 12 22 20L18 22C18 14 16 8 13 8C9 8 6 14 6 22Z" fill="#35d6ee" stroke="#0a1e6e" stroke-width="1.100"/><path d="M4 20C5 10 10 5 14 5" stroke="#ffe84a" stroke-width="1.800" fill="none"/><path d="M14 3C20 3 22 12 22 20" stroke="#ffe84a" stroke-width="1.600" fill="none"/><path d="M2 22C4 20 5 21 6 22" stroke="#fff" fill="none"/></g><g transform="translate(1329.0,258.0) scale(0.92)"><path d="M2 7L14 3L22 8L10 12Z" fill="#35d6ee" stroke="#0a1e6e" stroke-width="1"/><path d="M2 7L10 12L10 17L2 12Z" fill="#2040e0"/><path d="M10 12L22 8L22 13L10 17Z" fill="#ffe84a" stroke="#0a1e6e" stroke-width=".8"/><path d="M2 12L10 17L22 13L22 17L10 22L2 17Z" fill="#109ab0" stroke="#0a1e6e" stroke-width="1"/></g><path d="M1202.0 279.5h9l-4.500 5z" fill="#000"/><path d="M1232.0 279.5h9l-4.500 5z" fill="#000"/><path d="M1262.0 279.5h9l-4.500 5z" fill="#000"/></svg></div>
<div class="ft" style="left:1229px;top:331px;width:195px;height:65px"><div class="ti">操作</div><div class="x" style="left:175px;top:7px">×</div><div class="bar"></div><div class="grip" style="left:4px;top:34px;height:15px"></div><svg class="a" style="left:0;top:0" width="195" height="65" viewBox="1229 331 195 65"><g transform="translate(1244.0,369.0) scale(0.92)"><rect x="2" y="2" width="9" height="9" fill="#2040e0" stroke="#0a1e6e"/><rect x="13" y="2" width="9" height="9" fill="#2a8af0" stroke="#0a1e6e"/><rect x="2" y="13" width="9" height="9" fill="#35d6ee" stroke="#0a1e6e"/><rect x="13" y="13" width="9" height="9" fill="#35d6ee" stroke="#0a1e6e"/><path d="M13 22L22 13M13 17L17 13" stroke="#2040e0" stroke-width="1.400"/></g><g transform="translate(1274.0,368.0) scale(0.92)"><path d="M2 4L20 2L10 10Z" fill="#fff" stroke="#0a1e6e"/><path d="M3 16C8 14 12 10 14 8L22 12C18 14 14 20 12 23Z" fill="#35d6ee" stroke="#2040e0" stroke-width="1.100"/><rect x="16" y="2" width="7" height="7" fill="#f0e060" stroke="#000"/><rect x="18.500" y="4" width="2.500" height="3" fill="none" stroke="#000" stroke-width=".8"/></g><g transform="translate(1305.0,369.0) scale(0.92)"><g transform="scale(.55)"><path d="M4 8L11 4L20 6L20 16L13 21L4 18Z" fill="#35d6ee" stroke="#0a1e6e" stroke-width="1.100"/><path d="M4 8L13 10.500L20 6M13 10.500V21" stroke="#0a1e6e" stroke-width="1" fill="none"/><path d="M4 8L11 4L20 6L13 10.500Z" fill="#8af0ff" stroke="#0a1e6e" stroke-width="1"/></g><g transform="translate(11,10) scale(.55)"><path d="M4 8L11 4L20 6L20 16L13 21L4 18Z" fill="#35d6ee" stroke="#0a1e6e" stroke-width="1.100"/><path d="M4 8L13 10.500L20 6M13 10.500V21" stroke="#0a1e6e" stroke-width="1" fill="none"/><path d="M4 8L11 4L20 6L13 10.500Z" fill="#8af0ff" stroke="#0a1e6e" stroke-width="1"/></g><path d="M6 11V20H16" stroke="#e01818" stroke-width="2.600" fill="none"/><path d="M6 12V20H15" stroke="#ffe84a" stroke-width="1" fill="none"/><path d="M14 17.500l4 2.500l-4 2.500z" fill="#e01818"/></g><g transform="translate(1335.0,368.0) scale(0.92)"><path d="M2 6L10 3C18 4 21 12 20 22L14 18C15 12 12 8 6 9Z" fill="#ffe9a0" stroke="#c03030" stroke-width="1"/><path d="M2 6L10 3L14 5L6 9Z" fill="#35d6ee" stroke="#0a1e6e" stroke-width="1"/><path d="M14 18L20 22L20 17L15 13Z" fill="#35d6ee" stroke="#0a1e6e" stroke-width="1"/></g><g transform="translate(1365.0,368.0) scale(0.92)"><path d="M3 6L9 2V16L3 20Z" fill="none" stroke="#109ad0" stroke-width="1.200" stroke-dasharray="1.300 1.300"/><path d="M14 9L21 4V17L14 22Z" fill="#35d6ee" stroke="#0a1e6e" stroke-width="1.100"/><path d="M5 14V19L11 21" stroke="#000" stroke-width="1.300" fill="none"/><path d="M9 18.500l3.500 3l-4 .5z" fill="#000"/></g><g transform="translate(1395.0,368.0) scale(0.92)"><path d="M2 17C5 8 12 5 16 6L22 10C16 10 11 14 9 22Z" fill="#35d6ee" stroke="#0a1e6e" stroke-width="1.100"/><path d="M11 7L17 4L22 10L15 11Z" fill="#ffe84a" stroke="#0a1e6e" stroke-width="1"/><path d="M17 2L22 1L21 6Z" fill="#000"/></g><path d="M1263.5 389.5h9l-4.500 5z" fill="#000"/><path d="M1293.5 389.5h9l-4.500 5z" fill="#000"/><path d="M1323.5 389.5h9l-4.500 5z" fill="#000"/><path d="M1353.5 389.5h9l-4.500 5z" fill="#000"/><path d="M1383.5 389.5h9l-4.500 5z" fill="#000"/><path d="M1413.5 389.5h9l-4.500 5z" fill="#000"/></svg></div>
<div class="ft" style="left:1539px;top:324px;width:127px;height:63px"><div class="ti">高级曲面</div><div class="x" style="left:107px;top:7px">×</div><div class="bar"></div><div class="grip" style="left:4px;top:32px;height:15px"></div><svg class="a" style="left:0;top:0" width="127" height="63" viewBox="1539 324 127 63"><g transform="translate(1555.0,361.0) scale(0.92)"><path d="M12 1V8" stroke="#000" stroke-width="1.200"/><path d="M9.500 4L12 0.500L14.500 4Z" fill="#000"/><path d="M2 21C2 8 22 8 22 20L19 22C16 17 8 17 5 22Z" fill="#35d6ee" stroke="#0a1e6e" stroke-width="1.100"/><path d="M8 17L12 9L16 17Z" fill="#ffe84a" stroke="#2040e0" stroke-width="1"/></g><g transform="translate(1583.0,361.0) scale(0.92)"><path d="M2 8L14 3L22 8L10 14Z" fill="#e8e08a" stroke="#000" stroke-width="1.100"/><path d="M4 8.500L14 4.500L20 8L10 12Z" fill="#c8c060" stroke="#555" stroke-width=".6"/><path d="M2 14L10 19L22 12L22 16L10 23L2 18Z" fill="#35d6ee" stroke="#0a1e6e" stroke-width="1"/><path d="M4 17V23M2 20.500L4 18L6 20.500" stroke="#000" stroke-width="1" fill="none"/></g><g transform="translate(1611.0,361.0) scale(0.92)"><path d="M6 8L16 3L23 7L13 13Z" fill="#f4ecb0" stroke="#000" stroke-width="1.100"/><path d="M4 12L12 17L23 10L23 14L12 22L4 17Z" fill="#35d6ee" stroke="#0a1e6e" stroke-width="1"/><path d="M4 22V8" stroke="#e01818" stroke-width="2.200"/><path d="M4 21V9" stroke="#ffe84a" stroke-width=".9"/><path d="M1.500 11L4 6.500L6.500 11Z" fill="#e01818"/></g><g transform="translate(1639.0,361.0) scale(0.92)"><path d="M2 9C6 4 12 4 16 8L22 6L23 14L14 20L4 17Z" fill="#35d6ee" stroke="#0a1e6e" stroke-width="1.100"/><path d="M4 17L12 12L23 14M12 12L10 6" stroke="#0a1e6e" stroke-width=".9" fill="none"/><path d="M15 3H22M20 1L22.500 3L20 5" stroke="#000" stroke-width="1.100" fill="none"/><path d="M18 18V23H21" stroke="#000" stroke-width="1.100" fill="none"/></g></svg></div>
<div class="ft" style="left:1489px;top:472px;width:99px;height:63px"><div class="ti">已展开外形</div><div class="x" style="left:79px;top:7px">×</div><div class="bar"></div><div class="grip" style="left:4px;top:32px;height:15px"></div><svg class="a" style="left:0;top:0" width="99" height="63" viewBox="1489 472 99 63"><g transform="translate(1505.0,510.0) scale(0.92)"><path d="M1 18L10 13L13 16L4 22Z" fill="#ffc890" stroke="#e05010" stroke-width="1"/><path d="M13 16L22 13L19 20L10 22Z" fill="#ffc890" stroke="#e05010" stroke-width="1"/><path d="M5 12L11 9L18 11L18 16L12 19L5 16Z" fill="#3060f0" stroke="#0a1e6e" stroke-width="1"/><path d="M5 12L12 14L18 11M12 14V19" stroke="#9ac0ff" stroke-width=".9" fill="none"/></g><g transform="translate(1534.0,509.0) scale(0.92)"><path d="M2 11C5 1 19 1 22 6L20 12C17 7 8 7 5 14Z" fill="#35d6ee" stroke="#2040e0" stroke-width="1.100"/><path d="M3 21L8 18H22L17 22Z" fill="#35d6ee" stroke="#2040e0" stroke-width="1"/><path d="M12 5V21" stroke="#000" stroke-width="1.600"/><path d="M9 8L12 4L15 8M9 18L12 22L15 18" stroke="#000" stroke-width="1.300" fill="none"/></g><g transform="translate(1561.0,509.0) scale(0.92)"><path d="M2 8L22 2" stroke="#2040e0" stroke-width="1.300"/><path d="M12 5V13" stroke="#000" stroke-width="1.400"/><path d="M9.500 10L12 14L14.500 10Z" fill="#000"/><path d="M2 22C2 11 22 11 22 21L19 23C16 18 8 18 5 23Z" fill="#35d6ee" stroke="#2040e0" stroke-width="1.100"/><path d="M4 20C8 14 16 14 20 19" stroke="#ffe84a" stroke-width="1.600" fill="none"/></g></svg></div>
<div class="a" style="left:1295px;top:470px;width:113px;height:71px;background:linear-gradient(#b9c8d6,#cfdbe6 30%,#d5dfe9);border:1px solid #9fb0c0"><div class="a" style="left:7px;top:10px;font-size:12px;color:#8e959c">提取</div><div class="a" style="left:86px;top:9px;width:17px;height:16px;background:#9aa0a8;color:#fff;font-size:11px;font-weight:bold;line-height:14px;text-align:center">x</div><div class="a" style="left:6px;top:29px;width:100px;height:34px;background:linear-gradient(#fdfdff 0px,#ececf5 4px,#d4d4e8 9px,#d0d0e6 12px,#d0d0e6 22px,#c0c0d6 27px,#a4a4bc 31px,#707080 33px)"></div><div class="grip" style="left:11px;top:33px;height:15px"></div><svg class="a" style="left:0;top:0" width="113" height="71" viewBox="1295 470 113 71"><g transform="translate(1318.0,507.0) scale(0.92)"><path d="M3 18C3 8 21 8 21 18L21 20C15 17 9 17 3 20Z" fill="#35d6ee" stroke="#0a1e6e" stroke-width="1.200"/><path d="M3 19.500C9 16.500 15 16.500 21 19.500" stroke="#ffe84a" stroke-width="2" fill="none"/></g><g transform="translate(1346.0,507.0) scale(0.92)"><path d="M4 8L11 4L20 6L20 16L13 21L4 18Z" fill="#d0f6ff" stroke="#0a1e6e" stroke-width="1.100"/><path d="M4 8L13 10.500L20 6M13 10.500V21" stroke="#0a1e6e" stroke-width="1" fill="none"/><path d="M4 8L11 4L20 6L13 10.500Z" fill="#eaffff" stroke="#0a1e6e" stroke-width="1"/><path d="M11 13L20 21" stroke="#e01818" stroke-width="2.200"/><path d="M12 14L19 20" stroke="#ffe84a" stroke-width=".9"/><path d="M21.500 22.500L16 21L20 17Z" fill="#e01818"/></g><g transform="translate(1374.0,506.0) scale(0.92)"><g transform="scale(.55)"><path d="M4 8L11 4L20 6L20 16L13 21L4 18Z" fill="#35d6ee" stroke="#0a1e6e" stroke-width="1.100"/><path d="M4 8L13 10.500L20 6M13 10.500V21" stroke="#0a1e6e" stroke-width="1" fill="none"/><path d="M4 8L11 4L20 6L13 10.500Z" fill="#8af0ff" stroke="#0a1e6e" stroke-width="1"/></g><g transform="translate(11,10) scale(.55)"><path d="M4 8L11 4L20 6L20 16L13 21L4 18Z" fill="#35d6ee" stroke="#0a1e6e" stroke-width="1.100"/><path d="M4 8L13 10.500L20 6M13 10.500V21" stroke="#0a1e6e" stroke-width="1" fill="none"/><path d="M4 8L11 4L20 6L13 10.500Z" fill="#8af0ff" stroke="#0a1e6e" stroke-width="1"/></g><path d="M6 11V20H16" stroke="#e01818" stroke-width="2.600" fill="none"/><path d="M6 12V20H15" stroke="#ffe84a" stroke-width="1" fill="none"/><path d="M14 17.500l4 2.500l-4 2.500z" fill="#e01818"/></g></svg></div>
<div id="run"><div class="tb"><div class="a" style="left:8px;top:6px;font-size:12px;color:#999">运行命令</div><svg class="a" style="left:94px;top:0" width="125" height="30" viewBox="0 0 125 30"><g stroke="#777" stroke-width="1" fill="none"><path d="M6 15h10"/><path d="M97.500 9.500l10 10M107.500 9.500l-10 10"/></g><rect x="51.500" y="9.500" width="9" height="9" fill="none" stroke="#dcdcdc"/></svg></div><div class="earth" style="left:0;top:74px;width:46px;height:24px"></div><div class="box"><div class="a" style="left:0;top:1px;width:14px;height:14px;background:#7a7af6"></div><div class="a" style="left:0;top:17px;width:14px;height:17px;background:#7a7af6"></div><div class="a" style="left:0;top:34px;width:14px;height:15px;background:linear-gradient(#5a5a84,#c8c8d8)"></div><div class="a" style="left:14px;top:35px;width:185px;height:14px;background:#7a7af6;z-index:2"></div><div class="a" style="z-index:3;left:172px;top:35px;width:12px;height:14px;background:#9b9bb6;background-image:repeating-conic-gradient(#8080a4 0% 25%,#b0b0c8 0% 50%);background-size:2px 2px"></div><svg class="a" style="left:0;top:0;z-index:4" width="199" height="49"><path d="M2.500 13l5-9l5 9zM2.500 21l5 9l5-9zM18 42l9-5v10zM187 37v10l9-5z" fill="#000"/><path d="M15 42h14" stroke="#fff5" /></svg><div class="a" style="left:29px;top:16px;width:68px;height:19px;background:#3e3d72;border-radius:2px"></div><div class="a" style="left:110px;top:15px;width:86px;height:20px;background:#3e3d72;border-radius:2px"></div><div class="a" style="left:30px;top:19px;font-size:14px;line-height:19px;color:#fff;text-decoration:underline;white-space:nowrap">多重提取.2</div><div class="a" style="left:97px;top:28px;width:14px;height:2px;background:#fff"></div><div class="a" style="left:111px;top:19px;font-size:14px;line-height:19px;color:#fff;text-decoration:underline;white-space:nowrap">多重结果管理</div><svg class="a" style="left:14px;top:22px" width="14" height="14" viewBox="0 0 24 24"><g transform="scale(.55)"><path d="M4 8L11 4L20 6L20 16L13 21L4 18Z" fill="#35d6ee" stroke="#0a1e6e" stroke-width="1.100"/><path d="M4 8L13 10.500L20 6M13 10.500V21" stroke="#0a1e6e" stroke-width="1" fill="none"/><path d="M4 8L11 4L20 6L13 10.500Z" fill="#8af0ff" stroke="#0a1e6e" stroke-width="1"/></g><g transform="translate(11,10) scale(.55)"><path d="M4 8L11 4L20 6L20 16L13 21L4 18Z" fill="#35d6ee" stroke="#0a1e6e" stroke-width="1.100"/><path d="M4 8L13 10.500L20 6M13 10.500V21" stroke="#0a1e6e" stroke-width="1" fill="none"/><path d="M4 8L11 4L20 6L13 10.500Z" fill="#8af0ff" stroke="#0a1e6e" stroke-width="1"/></g><path d="M6 11V20H16" stroke="#e01818" stroke-width="2.600" fill="none"/><path d="M6 12V20H15" stroke="#ffe84a" stroke-width="1" fill="none"/><path d="M14 17.500l4 2.500l-4 2.500z" fill="#e01818"/></svg></div></div>
<svg class="a" style="left:0;top:0;pointer-events:none" width="1920" height="1040" viewBox="0 0 1920 1040"><defs><radialGradient id="ballg" cx=".35" cy=".3" r=".8"><stop offset="0" stop-color="#fff8a0"/><stop offset=".45" stop-color="#ffd020"/><stop offset="1" stop-color="#e040e0" stop-opacity="0"/></radialGradient></defs><g transform="translate(465.6,50.6) scale(0.95)"><path d="M1 13h13M1 15.500h14M1 18h14M2 20.500h12" stroke="#2040e0" stroke-width="1.300"/><path d="M1 14.200h13M1 16.700h14M1 19.200h13" stroke="#35d6ee" stroke-width="1"/><path d="M12 10L20 2L23 5L15 13Z" fill="#223" stroke="#000" stroke-width=".8"/><path d="M9 13L12 9L16 13L13 17Z" fill="#f0d860" stroke="#000" stroke-width=".8"/></g><g transform="translate(495.6,50.6) scale(0.95)"><circle cx="9" cy="15" r="7.500" fill="#e040e0"/><circle cx="9" cy="15" r="7.500" fill="url(#ballg)"/><path d="M12 10L20 3" stroke="#222" stroke-width="3"/><path d="M19 1l1 2l2 -1l-1 2l2 1l-2 .5l.5 2l-2 -1" stroke="#f0a020" stroke-width=".9" fill="none"/></g><g transform="translate(539.6,50.6) scale(0.95)"><rect x="9.500" y="10.500" width="4" height="4" fill="#a8a8b4"/></g><g transform="translate(567.6,50.6) scale(0.95)"><path d="M4 20C12 20 16 12 12 7C10 4 15 2 19 6" fill="none" stroke="#a8a8b4" stroke-width="1.500"/><path d="M17 3L20 7L15.500 7Z" fill="#d8d8e0" stroke="#a8a8b4" stroke-width=".8"/></g><g transform="translate(595.6,50.6) scale(0.95)"><path d="M2 14C5 5 17 3 22 10L18 18C16 12 8 12 5 19Z" fill="#dcdce6" stroke="#a8a8b4" stroke-width="1.400"/></g><g transform="translate(624.6,50.6) scale(0.95)"><path d="M2 13L10 6L22 9V14L14 21L2 17Z" fill="#dcdce6" stroke="#a8a8b4" stroke-width="1.300"/><path d="M2 13L14 16L22 9M14 16V21" stroke="#a8a8b4" stroke-width="1.100" fill="none"/></g><g transform="translate(658.6,50.6) scale(0.95)"><path d="M4 8L10 4H20V16L14 21H4Z" fill="#dcdce6" stroke="#a8a8b4" stroke-width="1.400"/><path d="M4 8H14V21M14 8L20 4" stroke="#a8a8b4" stroke-width="1.200" fill="none"/><path d="M10 11V19L12.500 17L14 21L16 20L14.500 16.500H17.500Z" fill="#ececf2" stroke="#a8a8b4" stroke-width="1"/></g><g transform="translate(686.6,50.6) scale(0.95)"><path d="M4 8L10 4H20V16L14 21H4Z" fill="#dcdce6" stroke="#a8a8b4" stroke-width="1.400"/><path d="M4 8H14V21M14 8L20 4" stroke="#a8a8b4" stroke-width="1.200" fill="none"/><path d="M10 11V19L12.500 17L14 21L16 20L14.500 16.500H17.500Z" fill="#ececf2" stroke="#a8a8b4" stroke-width="1"/></g><g transform="translate(723.6,50.6) scale(0.95)"><path d="M3 9L9 4L17 6L17 11L22 12V18L14 22L8 19V15L3 13Z" fill="#35d6ee" stroke="#0a1e6e" stroke-width="1.100"/><path d="M3 9L11 11L17 6M11 11V15M8 15L14 17L22 12M14 17V22" stroke="#0a1e6e" stroke-width=".9" fill="none"/><path d="M6 7C10 4 14 5 15 9" stroke="#e01818" stroke-width="1.600" fill="none"/><path d="M11 10V20L13.500 17.500L15 21.500L17 20.500L15.500 17H19Z" fill="#ffe84a" stroke="#000" stroke-width=".9"/></g><g transform="translate(761.6,50.6) scale(0.95)"><path d="M4 2V19M8.500 2V19M13 2V19M17.500 2V19M2 4H20M2 8.500H20M2 13H20M2 17.500H20" stroke="#2040e0" stroke-width="1.300"/><path d="M11 5V21" stroke="#e01818" stroke-width="1.300"/><path d="M12 9V21L14.500 18.500L16 22.500L18 21.500L16.500 18H20Z" fill="#ffe84a" stroke="#000" stroke-width=".9"/></g><g transform="translate(798.6,50.6) scale(0.95)"><path d="M4 8l3-3l3 3l-3 3zM14 4l3-3l3 3l-3 3zM2 18l2.500-2.500l2.500 2.500l-2.500 2.500zM19 7l2-2l2 2l-2 2z" fill="#000"/><path d="M3 20L10 13M9 9L13 5" stroke="#000" stroke-width="1.200" stroke-dasharray="1.500 1.500"/><path d="M11 9V21L13.500 18.500L15 22.500L17 21.500L15.500 18H19Z" fill="#ffe84a" stroke="#000" stroke-width=".9"/></g><g transform="translate(844.6,50.6) scale(0.95)"><path d="M2 9L20 3L22 15L4 21Z" fill="#35d6ee" stroke="#2040e0" stroke-width="1.300"/><path d="M2 9L13 13L20 3M4 21L10 13.500M22 15L14.500 12" stroke="#2040e0" stroke-width="1.100" fill="none"/></g><g transform="translate(872.6,50.6) scale(0.95)"><g transform="translate(0,1) scale(.46)"><path d="M2 9L20 3L22 15L4 21Z" fill="#35d6ee" stroke="#2040e0" stroke-width="1.300"/><path d="M2 9L13 13L20 3M4 21L10 13.500M22 15L14.500 12" stroke="#2040e0" stroke-width="1.100" fill="none"/></g><g transform="translate(12,2) scale(.46)"><path d="M2 9L20 3L22 15L4 21Z" fill="#35d6ee" stroke="#2040e0" stroke-width="1.300"/><path d="M2 9L13 13L20 3M4 21L10 13.500M22 15L14.500 12" stroke="#2040e0" stroke-width="1.100" fill="none"/></g><g transform="translate(1,12) scale(.46)"><path d="M2 9L20 3L22 15L4 21Z" fill="#35d6ee" stroke="#2040e0" stroke-width="1.300"/><path d="M2 9L13 13L20 3M4 21L10 13.500M22 15L14.500 12" stroke="#2040e0" stroke-width="1.100" fill="none"/></g><g transform="translate(13,13) scale(.46)"><path d="M2 9L20 3L22 15L4 21Z" fill="#35d6ee" stroke="#2040e0" stroke-width="1.300"/><path d="M2 9L13 13L20 3M4 21L10 13.500M22 15L14.500 12" stroke="#2040e0" stroke-width="1.100" fill="none"/></g></g><g transform="translate(901.6,50.6) scale(0.95)"><g transform="translate(0,1) scale(.46)"><path d="M2 9L20 3L22 15L4 21Z" fill="#35d6ee" stroke="#2040e0" stroke-width="1.300"/><path d="M2 9L13 13L20 3M4 21L10 13.500M22 15L14.500 12" stroke="#2040e0" stroke-width="1.100" fill="none"/></g><path d="M5 6V20L8 17L10 21.500L12 20.500L10 16.500H14Z" fill="#000"/><text x="14" y="21" font-size="15" font-weight="bold" font-family="Liberation Sans,sans-serif" fill="#1020e0">?</text></g><g transform="translate(948.6,50.6) scale(0.95)"><rect x="0" y="0" width="24" height="24" fill="#9ad8e8" opacity=".5"/><path d="M2 8V18C2 21 10 21 10 18V8" fill="#c03020" stroke="#601008" stroke-width=".8"/><ellipse cx="6" cy="8" rx="4" ry="2" fill="#e86050" stroke="#601008" stroke-width=".8"/><path d="M15 12V21C15 23.500 22 23.500 22 21V12" fill="#208a9a" stroke="#0a3a48" stroke-width=".8"/><ellipse cx="18.500" cy="12" rx="3.500" ry="1.800" fill="#50c0d0" stroke="#0a3a48" stroke-width=".8"/><path d="M7 13L19 8L16 19L13 15Z" fill="#fff" stroke="#888" stroke-width=".7"/><path d="M3 19l4 2v-4zM21 17l-4-2v4z" fill="#ffe020"/></g><path d="M742.5 70.5h9l-4.500 5z" fill="#000"/><path d="M651.5 46V77" stroke="#8e8ea6"/><path d="M652.5 46V77" stroke="#fff"/><path d="M716.5 46V77" stroke="#8e8ea6"/><path d="M717.5 46V77" stroke="#fff"/><path d="M754.5 46V77" stroke="#8e8ea6"/><path d="M755.5 46V77" stroke="#fff"/><path d="M790.5 46V77" stroke="#8e8ea6"/><path d="M791.5 46V77" stroke="#fff"/><path d="M529.5 47V61" stroke="#fff" stroke-width="2"/><path d="M530.5 48V62" stroke="#8e8ea6"/><path d="M834.5 47V61" stroke="#fff" stroke-width="2"/><path d="M835.5 48V62" stroke="#8e8ea6"/><path d="M937.5 47V61" stroke="#fff" stroke-width="2"/><path d="M938.5 48V62" stroke="#8e8ea6"/><g transform="translate(15.6,987.9) scale(0.95)"><path d="M5 2H15L20 7V22H5Z" fill="#ffffe8" stroke="#333" stroke-width="1"/><path d="M15 2V7H20" fill="#fff" stroke="#333" stroke-width="1"/></g><g transform="translate(42.6,987.9) scale(0.95)"><path d="M2 8H8L10 10H18V20H2Z" fill="#d8a820" stroke="#5a4000" stroke-width="1"/><path d="M2 20L6 12H22L18 20Z" fill="#ffd84a" stroke="#5a4000" stroke-width="1"/><path d="M14 5C17 3 20 4 21 7M21 7L18.500 6.500M21 7L21.500 4.500" stroke="#000" stroke-width="1" fill="none"/></g><g transform="translate(71.6,987.9) scale(0.95)"><rect x="3" y="3" width="18" height="18" fill="#d8c800" stroke="#000" stroke-width="1.200"/><rect x="6" y="3" width="12" height="7" fill="#fff" stroke="#000"/><rect x="7" y="14" width="10" height="7" fill="#222"/><rect x="9" y="15.500" width="3" height="4" fill="#d8c800"/></g><g transform="translate(99.6,987.9) scale(0.95)"><path d="M7 10L10 2H20L17 10Z" fill="#fff" stroke="#000" stroke-width=".9"/><path d="M10.500 4.500h7M10 6.500h7M9 8.500h7" stroke="#2040c0" stroke-width=".8"/><path d="M2 12L6 9H22L18 12Z" fill="#e8d860" stroke="#000" stroke-width=".9"/><path d="M2 12H18V20H2Z" fill="#c8b840" stroke="#000" stroke-width=".9"/><path d="M18 12L22 9V17L18 20Z" fill="#a89820" stroke="#000" stroke-width=".9"/><rect x="4" y="15" width="10" height="2" fill="#222"/></g><g transform="translate(127.1,987.9) scale(0.95)"><path d="M6 2L14 16M18 2L10 16" stroke="#333" stroke-width="1.800"/><circle cx="8" cy="19" r="3" fill="none" stroke="#2040e0" stroke-width="1.800"/><circle cx="16" cy="19" r="3" fill="none" stroke="#2040e0" stroke-width="1.800"/></g><g transform="translate(155.6,987.9) scale(0.95)"><path d="M3 2H11L14 5V16H3Z" fill="#fff" stroke="#222" stroke-width="1"/><path d="M9 7H17L21 11V22H9Z" fill="#fff" stroke="#222" stroke-width="1"/><path d="M11 12h7M11 14.500h7M11 17h7M11 19.500h7" stroke="#2040c0" stroke-width=".9"/></g><g transform="translate(183.1,987.9) scale(0.95)"><path d="M3 5H18V21H3Z" fill="#b89858" stroke="#3a2a00" stroke-width="1"/><rect x="7" y="2.500" width="7" height="4.500" fill="#ddd" stroke="#333" stroke-width=".9"/><path d="M10 10H22V22H10Z" fill="#fff" stroke="#222" stroke-width="1"/><path d="M12 13h8M12 15.500h8M12 18h8" stroke="#2040c0" stroke-width=".9"/></g><g transform="translate(211.6,987.9) scale(0.95)"><path d="M4 11C9 3 19 5 19 13C19 18 15 20 12 20" fill="none" stroke="#0a4a38" stroke-width="4.200"/><path d="M4 11C9 3 19 5 19 13C19 18 15 20 12 20" fill="none" stroke="#20b888" stroke-width="2.400"/><path d="M1.500 5L3 14L11 11Z" fill="#20b888" stroke="#0a4a38" stroke-width="1"/></g><g transform="translate(241.6,987.9) scale(0.95)"><g transform="translate(24,0) scale(-1,1)"><path d="M4 11C9 3 19 5 19 13C19 18 15 20 12 20" fill="none" stroke="#a0a0ac" stroke-width="4.200"/><path d="M4 11C9 3 19 5 19 13C19 18 15 20 12 20" fill="none" stroke="#d4d4dc" stroke-width="2.400"/><path d="M1.500 5L3 14L11 11Z" fill="#d4d4dc" stroke="#a0a0ac" stroke-width="1"/></g></g><g transform="translate(271.6,987.9) scale(0.95)"><path d="M3 2L3 17L7 13L10 20L12.500 19L9.500 12.500L14.500 12.500Z" fill="#ffe84a" stroke="#000" stroke-width="1"/><text x="12" y="19" font-size="17" font-weight="bold" font-family="Liberation Sans,sans-serif" fill="#10108a">?</text></g><g transform="translate(317.6,987.9) scale(0.95)"><text x="0" y="19" font-size="21" font-style="italic" font-weight="bold" font-family="Liberation Serif,serif" fill="#000">f</text><text x="8.500" y="20" font-size="10.500" font-weight="bold" font-family="Liberation Sans,sans-serif" fill="#000">(x)</text></g><g transform="translate(345.6,987.9) scale(0.95)"><path d="M12 3C18 3 22 6 22 10.500C22 15 18 18 12 18C11 18 10 18 9 17.700L4 22L6 16.500C3.500 15 2 13 2 10.500C2 6 6 3 12 3Z" fill="#fff" stroke="#000" stroke-width="1.200"/><path d="M6 8h12M5.500 10.500h13M6 13h12" stroke="#000" stroke-width=".9" stroke-dasharray="1.500 1"/></g><g transform="translate(371.6,987.9) scale(0.95)"><circle cx="12" cy="7" r="3" fill="none" stroke="#a8a8b4" stroke-width="1.600"/><circle cx="12" cy="15" r="4" fill="none" stroke="#a8a8b4" stroke-width="1.600"/></g><g transform="translate(396.6,987.9) scale(0.95)"><rect x="3" y="3" width="18" height="17" fill="#fff" stroke="#000" stroke-width="1.200"/><rect x="3" y="3" width="18" height="4" fill="#1020a0"/><path d="M3 10.500h18M3 14h18M3 17h18M7.500 7v13M12 7v13M16.500 7v13" stroke="#000" stroke-width=".9"/></g><g transform="translate(426.6,987.9) scale(0.95)"><rect x="2" y="9" width="6" height="7" fill="#ffe84a" stroke="#000" stroke-width=".9"/><path d="M8 12.500h5M13 5v15M13 5h4M13 12.500h4M13 20h4" stroke="#e02020" stroke-width="1" stroke-dasharray="1.500 1" fill="none"/><rect x="17" y="2.500" width="5" height="5" fill="#fff" stroke="#2040e0" stroke-width="1.300"/><rect x="17" y="10" width="5" height="5" fill="#fff" stroke="#2040e0" stroke-width="1.300"/><rect x="17" y="17.500" width="5" height="5" fill="#fff" stroke="#2040e0" stroke-width="1.300"/></g><g transform="translate(455.6,987.9) scale(0.95)"><path d="M7 11V7C7 1 17 1 17 7V11" fill="none" stroke="#555" stroke-width="2.400"/><path d="M4 11H18L21 13V22H7L4 20Z" fill="#9a9a9a" stroke="#222" stroke-width="1"/><path d="M4 11L7 13H21M7 13V22" stroke="#222" stroke-width=".9" fill="none"/><rect x="12" y="15" width="3" height="4" fill="#222"/></g><g transform="translate(485.6,987.9) scale(0.95)"><rect x="2" y="3" width="7" height="7" fill="#30c0c0" stroke="#000" stroke-width=".9"/><rect x="2" y="12" width="7" height="7" fill="#30c0c0" stroke="#000" stroke-width=".9"/><path d="M3.500 5h4M3.500 7.500h4M3.500 14h4M3.500 16.500h4" stroke="#ffe84a" stroke-width="1"/><text x="9" y="18" font-size="19" font-family="Liberation Sans,sans-serif" fill="#000">}</text><path d="M17 10h5M17 13h5" stroke="#000" stroke-width="1.100"/><path d="M2 21.500h8" stroke="#000" stroke-dasharray="1 1"/></g><g transform="translate(531.6,987.9) scale(0.95)"><path d="M3 5L9 10L18 9L21 11L13 14L12 21L9 15L3 16L7 12Z" fill="#35d6ee" stroke="#0a1e6e" stroke-width="1.100"/><path d="M15 16L22 19" stroke="#2040e0" stroke-width="1.500"/></g><g transform="translate(558.6,987.9) scale(0.95)"><rect x="2" y="3" width="20" height="18" fill="#ffff80" stroke="#00a0c0" stroke-width="1.600"/><path d="M12 5V19M5 12H19" stroke="#000" stroke-width="1.100"/><path d="M12 4L10 7.500H14ZM12 20L10 16.500H14ZM4 12L7.500 10V14ZM20 12L16.500 10V14Z" fill="#000"/></g><g transform="translate(586.6,987.9) scale(0.95)"><path d="M12 2V22M2 12H22" stroke="#2040e0" stroke-width="2.200"/><path d="M12 .5L8 5.500H16ZM12 23.500L8 18.500H16ZM.5 12L5.500 8V16ZM23.500 12L18.500 8V16Z" fill="#2040e0" stroke="#0a1e6e" stroke-width=".7"/></g><g transform="translate(615.6,987.9) scale(0.95)"><path d="M3 11C3 5 21 5 21 11C21 15 14 16 12 16" fill="none" stroke="#2040e0" stroke-width="1.800"/><path d="M2 9H12C14 9 14 12 12 12H9L9 16H2Z" fill="#ffe4c8" stroke="#000" stroke-width=".9"/><circle cx="15" cy="17" r="5" fill="#35d6ee" stroke="#0a1e6e" stroke-width="1"/><path d="M11 17C13 15 17 15 19 17" stroke="#fff" fill="none"/></g><g transform="translate(642.6,987.9) scale(0.95)"><path d="M13 13L21 22" stroke="#0a1e6e" stroke-width="4"/><path d="M13.500 13.500L20.500 21.500" stroke="#4a90ff" stroke-width="1.600"/><circle cx="9" cy="9" r="6.500" fill="#e8f4ff" stroke="#000" stroke-width="1.700"/><path d="M5.500 9H12.500" stroke="#000" stroke-width="2"/><path d="M9 5.500V12.500" stroke="#000" stroke-width="2"/></g><g transform="translate(671.6,987.9) scale(0.95)"><path d="M13 13L21 22" stroke="#0a1e6e" stroke-width="4"/><path d="M13.500 13.500L20.500 21.500" stroke="#4a90ff" stroke-width="1.600"/><circle cx="9" cy="9" r="6.500" fill="#e8f4ff" stroke="#000" stroke-width="1.700"/><path d="M5.500 9H12.500" stroke="#000" stroke-width="2"/></g><g transform="translate(699.6,987.9) scale(0.95)"><path d="M2 19L10 13H22L14 19Z" fill="#35d6ee" stroke="#0a1e6e" stroke-width="1"/><path d="M4 18.500L11 14M7 19L14 13.500M10 19L17 13.500M13 19L20 13.500" stroke="#0a7a9a" stroke-width=".6"/><path d="M12 16V4" stroke="#e08020" stroke-width="1.200" stroke-dasharray="1.500 1"/><path d="M9 6L12 1.500L15 6" stroke="#2040e0" stroke-width="1.300" fill="none"/></g><g transform="translate(727.6,987.9) scale(0.95)"><rect x="2" y="2" width="20" height="20" fill="#35d6ee" stroke="#2040e0" stroke-width="1.800"/><path d="M12 2V22M2 12H22" stroke="#2040e0" stroke-width="1.800"/><rect x="13" y="3" width="8" height="8" fill="#b8a8e8"/></g><g transform="translate(755.6,987.9) scale(0.95)"><path d="M2 8L8 2H22V16L16 22H2Z" fill="#35d6ee" stroke="#2040e0" stroke-width="1.400"/><path d="M2 8H16V22M16 8L22 2" stroke="#2040e0" stroke-width="1.400" fill="none"/><path d="M2 8L8 2H22L16 8Z" fill="#a8f4ff" stroke="#2040e0" stroke-width="1.200"/></g><g transform="translate(785.6,987.9) scale(0.95)"><path d="M4 5V19C4 23 20 23 20 19V5" fill="#f0d820" stroke="#000" stroke-width="1.200"/><path d="M8 7V21.500M16 7V21.500" stroke="#2040e0" stroke-width="2.400"/><ellipse cx="12" cy="5" rx="8" ry="3.200" fill="#fff8a0" stroke="#000" stroke-width="1.200"/><ellipse cx="12" cy="5" rx="5" ry="1.800" fill="#35d6ee" stroke="#000" stroke-width=".8"/></g><g transform="translate(815.6,987.9) scale(0.95)"><rect x="2" y="2" width="20" height="20" fill="#35d6ee" stroke="#0a1e6e" stroke-width="1.200"/><path d="M5 14L11 9L19 11L13 17Z" fill="#f4ec9a" stroke="#000" stroke-width=".9"/><path d="M5 14V17L13 20V17M13 20L19 14V11" stroke="#000" stroke-width=".9" fill="#c8c070"/><path d="M9 7L13 4L18 5.500L14 8.500Z" fill="none" stroke="#000" stroke-width=".9"/></g><g transform="translate(843.6,987.9) scale(0.95)"><rect x="2" y="2" width="20" height="20" fill="#35d6ee" stroke="#0a1e6e" stroke-width="1.200"/><path d="M5 15L11 11L18 13L12 17Z" fill="#f4ec9a" stroke="#000" stroke-width=".9"/><path d="M5 15V17.500L12 20V17M12 20L18 15.500V13" stroke="#000" stroke-width=".9" fill="#c8c070"/></g><g transform="translate(890.6,987.9) scale(0.95)"><path d="M4 14H17L21 11V18L17 21H4Z" fill="#ddd" stroke="#222" stroke-width="1"/><path d="M4 14L8 11H21M17 14V21" stroke="#222" stroke-width=".9" fill="none"/><circle cx="6" cy="6" r="3.500" fill="#30a0ff" stroke="#0a1e6e"/><path d="M10 4C14 2 18 4 19 9" stroke="#2040e0" stroke-width="1.200" stroke-dasharray="2 1.200" fill="none"/><path d="M16.500 7L19.500 10.500L21 6Z" fill="#2040e0"/></g><g transform="translate(936.6,987.9) scale(0.95)"><path d="M2 6H22" stroke="#2040e0" stroke-width="1.400"/><path d="M2 6L6 3.500V8.500ZM22 6L18 3.500V8.500Z" fill="#2040e0"/><rect x="2" y="13" width="20" height="7" fill="#35d6ee" stroke="#0a1e6e" stroke-width="1"/><path d="M5 13v3M8 13v4M11 13v3M14 13v4M17 13v3M20 13v4" stroke="#e02020" stroke-width=".9"/></g><g transform="translate(965.6,987.9) scale(0.95)"><path d="M8 3H20V8H16V22H11V8H8Z" fill="#666" stroke="#111" stroke-width="1"/><circle cx="7" cy="11" r="4.500" fill="#40a0ff" stroke="#0a1e6e" stroke-width="1"/><path d="M4 10C6 8 9 9 10 11" stroke="#40e060" stroke-width="1.300" fill="none"/><path d="M3 17H11V21H3Z" fill="#888" stroke="#111" stroke-width=".9"/></g><g transform="translate(992.6,987.9) scale(0.95)"><path d="M5 10H19L21 21H3Z" fill="#b89820" stroke="#3a2a00" stroke-width="1.100"/><path d="M9 10C9 4 15 4 15 10" fill="none" stroke="#3a2a00" stroke-width="2.400"/><path d="M7 12L6 20" stroke="#f0d860" stroke-width="1.500"/></g><g transform="translate(1040.6,987.9) scale(0.95)"><path d="M2 8H7L9 5H16L18 8H22V20H2Z" fill="#333" stroke="#000" stroke-width="1"/><circle cx="12" cy="14" r="4.500" fill="#ddd" stroke="#000" stroke-width="1.200"/><circle cx="12" cy="14" r="2" fill="#333"/><rect x="3.500" y="9.500" width="3" height="2" fill="#ddd"/></g><g transform="translate(1087.6,987.9) scale(0.95)"><path d="M12 12C8 12 8 6 13 6C20 6 20 18 12 18C3 18 3 4 12 3C17 3 21 6 21 10" fill="none" stroke="#a8a8b4" stroke-width="2.800"/><path d="M12 12C8 12 8 6 13 6C20 6 20 18 12 18C3 18 3 4 12 3" fill="none" stroke="#d8d8e0" stroke-width="1"/></g><g transform="translate(1115.6,987.9) scale(0.95)"><circle cx="11" cy="12" r="10" fill="#1a3a8a" stroke="#000" stroke-width="1"/><path d="M3 9C7 3 16 3 19 8" stroke="#60b0ff" stroke-width="2.200" fill="none"/><path d="M4 17C8 20 14 20 18 17" stroke="#e8a040" stroke-width="2" fill="none"/><path d="M11 9V19H20L22 13L14 11V6C14 4 11 4 11 6Z" fill="#fff" stroke="#000" stroke-width="1"/></g><g transform="translate(1143.6,987.9) scale(0.95)"><path d="M11 14V2M11 14L22 19M11 14L3 21" stroke="#2040e0" stroke-width="1.500"/><path d="M8.500 5L11 1L13.500 5Z" fill="#2040e0"/><path d="M19 15.500L23 19.500L18 20Z" fill="#2040e0"/><path d="M1 18L2 22.500L6 20Z" fill="#e0a000"/></g><g transform="translate(1171.6,987.9) scale(0.95)"><rect x="1.500" y="1.500" width="21" height="21" fill="none" stroke="#fff" stroke-dasharray="1.500 1.500"/><path d="M4 6h8M9 10h8M9 14h8M13 18h7" stroke="#2040e0" stroke-width="2.200"/><path d="M6 6V14H9M11 14V18H13" stroke="#35d6ee" stroke-width="1" fill="none"/></g><g transform="translate(1199.6,987.9) scale(0.95)"><path d="M4 2V22M10 2V22M16 2V22M22 2V22M2 4H22M2 10H22M2 16H22M2 22H22" stroke="#2040e0" stroke-width="1.400" stroke-dasharray="2.500 1"/></g><g transform="translate(1230.6,987.9) scale(0.95)"><path d="M3 7L9 3H21V17L15 21H3Z" fill="#35d6ee" stroke="#0a1e6e" stroke-width="1.100"/><path d="M3 7H15V21M15 7L21 3" stroke="#0a1e6e" stroke-width="1" fill="none"/><path d="M1 13C6 8 18 8 23 13C18 18 6 18 1 13Z" fill="none" stroke="#0a8a5a" stroke-width="1"/></g><g transform="translate(1258.6,987.9) scale(0.95)"><path d="M3 7L9 3H21V17L15 21H3Z" fill="#35d6ee" stroke="#0a1e6e" stroke-width="1.300"/><path d="M3 7H15V21M15 7L21 3" stroke="#0a1e6e" stroke-width="1.100" fill="none"/><path d="M6 10V18H12" stroke="#0a1e6e" stroke-width="1.200" fill="none"/></g><g transform="translate(1286.6,987.9) scale(0.95)"><path d="M3 4h6l3 6h5M7 10l4 7h4M15 13h6M17 19h5" stroke="#a8a8b4" stroke-width="2" fill="none"/></g><g transform="translate(1315.6,987.9) scale(0.95)"><path d="M3 14C6 9 12 5 20 4L22 8C16 9 12 13 10 18Z" fill="#d8d8e0" stroke="#a8a8b4" stroke-width="1.300"/><path d="M2 18h10M12 20h9" stroke="#a8a8b4" stroke-width="2"/><path d="M8 9C12 8 15 9 18 11" stroke="#a8a8b4" stroke-width="1.200" fill="none"/></g><g transform="translate(1343.6,987.9) scale(0.95)"><path d="M5 2V22" stroke="#2040e0" stroke-width="1.300"/><rect x="2" y="2" width="8" height="4" fill="#35d6ee" stroke="#2040e0"/><rect x="8" y="9" width="8" height="4" fill="#35d6ee" stroke="#2040e0"/><rect x="14" y="12" width="8" height="4" fill="#fff" stroke="#2040e0"/><rect x="8" y="18" width="8" height="4" fill="#35d6ee" stroke="#2040e0"/><path d="M3 14h9M3 14l3-2.500M3 14l3 2.500" stroke="#000" stroke-width="1.300" fill="none"/></g><g transform="translate(1371.6,987.9) scale(0.95)"><path d="M3 9C5 3 16 2 19 8C21 12 19 16 21 20L15 21C13 17 8 16 5 18C3 15 2 12 3 9Z" fill="#d8d8e0" stroke="#a8a8b4" stroke-width="1.300"/><path d="M6 11C9 8 14 8 16 12" stroke="#a8a8b4" fill="none"/></g><g transform="translate(1400.6,987.9) scale(0.95)"><rect x="6" y="2" width="12" height="4.500" fill="#35d6ee" stroke="#2040e0" stroke-width="1.200"/><rect x="6" y="9.500" width="12" height="4.500" fill="#35d6ee" stroke="#2040e0" stroke-width="1.200"/><rect x="6" y="17" width="12" height="4.500" fill="#35d6ee" stroke="#2040e0" stroke-width="1.200"/></g><g transform="translate(1429.6,987.9) scale(0.95)"><path d="M2 13L12 7L22 11L12 18Z" fill="#fff" stroke="#2040e0" stroke-width="1.200"/><path d="M2 15L12 20L22 13M2 17L12 22L22 15" stroke="#2040e0" stroke-width="1.200" fill="none"/><path d="M2 13L12 7L22 11L12 18Z" fill="#35d6ee" stroke="#2040e0" stroke-width="1.200" transform="translate(0,-4)"/><path d="M5 9L12 5L19 7.500L12 12Z" fill="#fff" stroke="#2040e0" stroke-width=".8"/></g><g transform="translate(1655.6,987.9) scale(0.95)"><path d="M3 3H19M3 1V6M19 1V6" stroke="#000" stroke-width="1"/><path d="M3 3L6 1.500V4.500ZM19 3L16 1.500V4.500Z" fill="#e0a000"/><rect x="3" y="8" width="12" height="13" fill="#223" /><path d="M4 11h9M4 13.500h9M4 16h9M4 18.500h9" stroke="#ccc" stroke-width=".9"/><path d="M21 8V21M19 8H23M19 21H23" stroke="#000" stroke-width="1"/><path d="M21 8L19.500 11H22.500ZM21 21L19.500 18H22.500Z" fill="#e0a000"/><rect x="8" y="8" width="9" height="9" fill="#35d6ee" stroke="#000" stroke-width=".9"/></g><g transform="translate(1683.6,987.9) scale(0.95)"><path d="M3 3H17M3 1V6M17 1V6" stroke="#000" stroke-width="1"/><path d="M3 3L6 1.500V4.500ZM17 3L14 1.500V4.500Z" fill="#e0a000"/><rect x="3" y="8" width="14" height="13" fill="#35d6ee" stroke="#0a1e6e" stroke-width="1.100"/><path d="M21 8V21M19 8H23M19 21H23" stroke="#000" stroke-width="1"/><path d="M21 8L19.500 11H22.500ZM21 21L19.500 18H22.500Z" fill="#e0a000"/></g><g transform="translate(1731.6,987.9) scale(0.95)"><text x="8" y="9" font-size="9" font-family="Liberation Mono,monospace" fill="#0a0a60" textLength="15">ABC</text><path d="M8 11.500h15" stroke="#0a0a60" stroke-width="1"/><path d="M14 12L3 20" stroke="#2040e0" stroke-width="1.300"/><path d="M2 21L4 16.500L7 20Z" fill="#2040e0"/></g><g transform="translate(1778.6,987.9) scale(0.95)"><path d="M5 8L10 4L20 5V16L15 21H5Z" fill="#c06868" stroke="#6a2020" stroke-width="1"/><path d="M3 10L8 6L17 7V18L12 22H3Z" fill="#7a9adc" stroke="#203a80" stroke-width="1"/><path d="M7 11V17C7 20 12 20 12 17" fill="none" stroke="#35d6ee" stroke-width="2"/><path d="M9 14l3 3l3 -3" stroke="#2040e0" stroke-width="1.300" fill="none"/></g><g transform="translate(1828.6,987.9) scale(0.95)"><path d="M4 8L10 3L18 6L14 18L6 20Z" fill="#b0ecff" stroke="#2040e0" stroke-width="1.200"/><path d="M3 21L21 3" stroke="#0a1e6e" stroke-width="1.200"/><path d="M8 12L18 9" stroke="#e02020" stroke-width="1.600"/><path d="M18 9L15 8M18 9L16 11.500M8 12L11 13M8 12L10 9.500" stroke="#e02020" stroke-width="1.100"/><circle cx="16" cy="5" r="2" fill="#ffe84a" stroke="#a06000" stroke-width=".7"/><path d="M6 21C10 18 14 20 18 21" stroke="#2040e0" fill="none"/></g><g transform="translate(1873.0,983.0) scale(1.25)"><path d="M14 1C17 0 20 1 19 4C18 6 15 7 13 7C17 8 19 10 17 13C15 16 10 16 8 14" fill="none" stroke="#e03030" stroke-width="1.600"/><path d="M3 6C1 14 6 20 4 20" stroke="none"/><text x="-3" y="14" font-size="14" font-style="italic" font-weight="bold" font-family="Liberation Sans,sans-serif" fill="#5040b0">D</text><path d="M8 6C13 6 16 9 13 12" fill="none" stroke="#e09020" stroke-width="1.500"/><text x="2" y="24" font-size="9.500" font-style="italic" font-weight="bold" font-family="Liberation Sans,sans-serif" fill="#5040b0" textLength="26">CATIA</text></g><path d="M231.5 1008.3h9l-4.500 5z" fill="#000"/><path d="M261.5 1008.3h9l-4.500 5z" fill="#000"/><path d="M416.5 1008.3h9l-4.500 5z" fill="#000"/><path d="M474.5 1008.3h9l-4.500 5z" fill="#000"/><path d="M774.5 1008.3h9l-4.500 5z" fill="#000"/><path d="M1218.5 1008.3h9l-4.500 5z" fill="#000"/><path d="M1248.5 1008.3h9l-4.500 5z" fill="#000"/><path d="M1391.5 1008.3h9l-4.500 5z" fill="#000"/><path d="M1448.5 1008.3h9l-4.500 5z" fill="#000"/><path d="M1749.5 1008.3h9l-4.500 5z" fill="#000"/><path d="M1798.5 1008.3h9l-4.500 5z" fill="#000"/><path d="M1848.5 1008.3h9l-4.500 5z" fill="#000"/><rect x="804" y="1006" width="10" height="8" fill="#fff"/><path d="M804.5 1008.0h9l-4.500 5z" fill="#000"/><path d="M5.5 983V997" stroke="#fff" stroke-width="2"/><path d="M6.5 984V998" stroke="#8e8ea6"/><path d="M307.5 983V997" stroke="#fff" stroke-width="2"/><path d="M308.5 984V998" stroke="#8e8ea6"/><path d="M521.5 983V997" stroke="#fff" stroke-width="2"/><path d="M522.5 984V998" stroke="#8e8ea6"/><path d="M880.5 983V997" stroke="#fff" stroke-width="2"/><path d="M881.5 984V998" stroke="#8e8ea6"/><path d="M927.5 983V997" stroke="#fff" stroke-width="2"/><path d="M928.5 984V998" stroke="#8e8ea6"/><path d="M1031.5 983V997" stroke="#fff" stroke-width="2"/><path d="M1032.5 984V998" stroke="#8e8ea6"/><path d="M1077.5 983V997" stroke="#fff" stroke-width="2"/><path d="M1078.5 984V998" stroke="#8e8ea6"/><path d="M1645.5 983V997" stroke="#fff" stroke-width="2"/><path d="M1646.5 984V998" stroke="#8e8ea6"/><path d="M1720.5 983V997" stroke="#fff" stroke-width="2"/><path d="M1721.5 984V998" stroke="#8e8ea6"/><path d="M1769.5 983V997" stroke="#fff" stroke-width="2"/><path d="M1770.5 984V998" stroke="#8e8ea6"/><path d="M1818.5 983V997" stroke="#fff" stroke-width="2"/><path d="M1819.5 984V998" stroke="#8e8ea6"/><path d="M1867.5 983V997" stroke="#fff" stroke-width="2"/><path d="M1868.5 984V998" stroke="#8e8ea6"/><rect x="1459" y="988" width="175" height="23" fill="#fff" stroke="#7e7e8e" stroke-width="2"/><path d="M1460 1011H1634V989" stroke="#f4f4fa" stroke-width="2" fill="none"/><rect x="1615" y="990.500" width="17" height="19" fill="#ececec" stroke="#8a8a8a"/><path d="M1619.0 998.0h9l-4.500 5z" fill="#000"/><text x="1462" y="1004" font-size="12.500" font-family="Liberation Sans,Noto Sans CJK SC,sans-serif" fill="#000">几何体.4</text><g transform="translate(1889.6,94.6) scale(0.95)"><path d="M2 18C5 14 9 20 13 16C17 12 20 14 23 4L23 14C19 20 10 22 4 23Z" fill="#e8a060" stroke="#a05a20" stroke-width=".6"/><path d="M3 9L13 3L22 8L21 11L12 17L4 13Z" fill="#3a3a3a" stroke="#000" stroke-width=".8"/><path d="M5 9.500L13 5L20 8.500L12 13Z" fill="#d8d8d8" stroke="#666" stroke-width=".6"/></g><g transform="translate(1889.6,141.6) scale(0.95)"><path d="M8 8V19C8 22 20 22 20 19V8" fill="#d0d0d8" stroke="#a8a8b4" stroke-width="1.200"/><ellipse cx="14" cy="8" rx="6" ry="2.500" fill="#e4e4ec" stroke="#a8a8b4" stroke-width="1.200"/><path d="M2 5h6M4 5v12h4M4 9h3M4 13h3" stroke="#a8a8b4" stroke-width="1.500" fill="none"/><path d="M2 5h6M4 9h3" stroke="#fff" stroke-width=".6" transform="translate(.8,.8)"/></g><g transform="translate(1889.6,169.6) scale(0.95)"><path d="M8 8V19C8 22 20 22 20 19V8" fill="#d0d0d8" stroke="#a8a8b4" stroke-width="1.200"/><ellipse cx="14" cy="8" rx="6" ry="2.500" fill="#e4e4ec" stroke="#a8a8b4" stroke-width="1.200"/><path d="M2 5h6M4 5v12h4M4 9h3M4 13h3" stroke="#a8a8b4" stroke-width="1.500" fill="none"/><path d="M2 5h6M4 9h3" stroke="#fff" stroke-width=".6" transform="translate(.8,.8)"/></g><g transform="translate(1889.6,197.6) scale(0.95)"><path d="M8 8V19C8 22 20 22 20 19V8" fill="#d0d0d8" stroke="#a8a8b4" stroke-width="1.200"/><ellipse cx="14" cy="8" rx="6" ry="2.500" fill="#e4e4ec" stroke="#a8a8b4" stroke-width="1.200"/><path d="M2 5h6M4 5v12h4M4 9h3M4 13h3" stroke="#a8a8b4" stroke-width="1.500" fill="none"/><path d="M2 5h6M4 9h3" stroke="#fff" stroke-width=".6" transform="translate(.8,.8)"/></g><g transform="translate(1889.6,225.6) scale(0.95)"><path d="M8 8V19C8 22 20 22 20 19V8" fill="#d0d0d8" stroke="#a8a8b4" stroke-width="1.200"/><ellipse cx="14" cy="8" rx="6" ry="2.500" fill="#e4e4ec" stroke="#a8a8b4" stroke-width="1.200"/><path d="M2 5h6M4 5v12h4M4 9h3M4 13h3" stroke="#a8a8b4" stroke-width="1.500" fill="none"/><path d="M2 5h6M4 9h3" stroke="#fff" stroke-width=".6" transform="translate(.8,.8)"/></g><g transform="translate(1889.6,269.6) scale(0.95)"><path d="M5 1L5 19L9.500 14.500L12.500 22L15.500 20.500L12.500 13.500L19 13.500Z" fill="#ffe84a" stroke="#10106a" stroke-width="1.200"/></g><g transform="translate(1889.6,301.6) scale(0.95)"><path d="M4 8l3-3l3 3l-3 3zM14 4l3-3l3 3l-3 3zM2 18l2.500-2.500l2.500 2.500l-2.500 2.500zM19 7l2-2l2 2l-2 2z" fill="#000"/><path d="M3 20L10 13M9 9L13 5" stroke="#000" stroke-width="1.200" stroke-dasharray="1.500 1.500"/><path d="M11 9V21L13.500 18.500L15 22.500L17 21.500L15.500 18H19Z" fill="#ffe84a" stroke="#000" stroke-width=".9"/></g><g transform="translate(1889.6,348.6) scale(0.95)"><path d="M6 6H14L22 21H6Z" fill="#fff" stroke="#113" stroke-width="1"/><path d="M11 13L18 1" stroke="#1a1a50" stroke-width="3.200"/><path d="M12 12L18 2" stroke="#f0e080" stroke-width="1.500"/><rect x="1" y="13" width="11" height="10" fill="#fff" stroke="#000" stroke-width=".9"/><path d="M2.500 15.500h8M2.500 17.700h8M2.500 20h8" stroke="#000" stroke-width="1"/></g><g transform="translate(1889.6,396.1) scale(0.95)"><path d="M3 2V21H23" stroke="#000" stroke-width="1.400" fill="none"/><path d="M3 21C6 6 14 2 20 3C22 4 22 8 22 10" stroke="#2040e0" stroke-width="1.400" fill="none"/><path d="M4 20L20 5" stroke="#ffe020" stroke-width="1.800"/></g><g transform="translate(1889.6,440.6) scale(0.95)"><path d="M5 12C3 4 13 1 17 6L19 11" fill="none" stroke="#0a1e6e" stroke-width="4.400"/><path d="M5 12C3 4 13 1 17 6L19 11" fill="none" stroke="#30b0f0" stroke-width="2.600"/><path d="M13 9L20 15L22 6Z" fill="#30b0f0" stroke="#0a1e6e" stroke-width="1"/><text x="5" y="22" font-size="9" font-family="Liberation Sans,sans-serif" fill="#000">x</text><text x="11" y="23" font-size="12" font-family="Liberation Sans,sans-serif" fill="#1020c0">N</text></g><g transform="translate(1889.6,471.6) scale(0.95)"><path d="M4 4H20M4 12H20M4 20H20M4 4V20M12 4V20M20 4V20" stroke="#2040e0" stroke-width="1"/><path d="M4 1.5l2.500 2.500l-2.500 2.500l-2.500 -2.500z" fill="#2040e0"/><path d="M4 9.5l2.500 2.500l-2.500 2.500l-2.500 -2.500z" fill="#2040e0"/><path d="M4 17.5l2.500 2.500l-2.500 2.500l-2.500 -2.500z" fill="#2040e0"/><path d="M12 1.5l2.500 2.500l-2.500 2.500l-2.500 -2.500z" fill="#2040e0"/><path d="M12 9.5l2.500 2.500l-2.500 2.500l-2.500 -2.500z" fill="#2040e0"/><path d="M12 17.5l2.500 2.500l-2.500 2.500l-2.500 -2.500z" fill="#2040e0"/><path d="M20 1.5l2.500 2.500l-2.500 2.500l-2.500 -2.500z" fill="#2040e0"/><path d="M20 9.5l2.500 2.500l-2.500 2.500l-2.500 -2.500z" fill="#2040e0"/><path d="M20 17.5l2.500 2.500l-2.500 2.500l-2.500 -2.500z" fill="#2040e0"/></g><g transform="translate(1889.6,502.1) scale(0.95)"><path d="M3 6H17V20H3Z" fill="#c8a860" stroke="#4a3000" stroke-width="1"/><rect x="7" y="3" width="6" height="4" fill="#ddd" stroke="#333" stroke-width=".8"/><path d="M6 8H15V17H6Z" fill="#fff8d0" stroke="#555" stroke-width=".7"/><path d="M8 10C12 9 13 13 9 14C12 14 13 16 10 16" stroke="#e02020" stroke-width="1.400" fill="none"/><path d="M9 19L16 15L23 17L16 22Z" fill="#35d6ee" stroke="#0a1e6e" stroke-width="1"/><path d="M19 8V16" stroke="#20a0a0" stroke-width="1.200"/></g><g transform="translate(1889.6,529.6) scale(0.95)"><path d="M2 12L10 6L20 10L12 17Z" fill="#f8ec90" stroke="#000" stroke-width="1"/><path d="M2 12V17L12 22V17M12 22L20 15V10" fill="#d8c860" stroke="#000" stroke-width="1"/><path d="M9 15L21 3" stroke="#2040e0" stroke-width="2.200"/><path d="M5 14C8 16 11 15 13 13" stroke="#35d6ee" stroke-width="2.400" fill="none"/></g><g transform="translate(1889.6,558.6) scale(0.95)"><path d="M3 22V9L8 12V8L13 12V8L17 11L20 6V22Z" fill="#f0d860" stroke="#222" stroke-width="1.100"/><path d="M5 5C7 1 12 1 14 3L12 6C10 4 8 5 7 7Z" fill="#555" stroke="#222" stroke-width=".8"/><rect x="9" y="16" width="4" height="6" fill="#fff" stroke="#222" stroke-width=".8"/></g><g transform="translate(1889.6,606.6) scale(0.95)"><path d="M6 12C9 6 16 4 21 9L19 20C17 14 13 12 9 14Z" fill="#222" stroke="#000"/><path d="M7 12C10 8 15 7 19 10" stroke="#f0a020" stroke-width="1.600" fill="none"/><path d="M3 4l1 1M7 2l.5 1.500M2 9l1.500 .5M5 7l1 1M10 3l.5 1M4 14l1 .5M3 18l1-.5M6 17l1-.5M8 20l.5-1M12 21l0-1M9 5l1 1M13 2l0 1.500" stroke="#e03020" stroke-width="1.100"/></g><g transform="translate(1889.6,650.6) scale(0.95)"><path d="M2 15L12 11L22 14L12 19Z" fill="#c8a0ff" stroke="#3a0a8a" stroke-width="1"/><path d="M2 15V19L12 23V19M12 23L22 18V14" fill="#8a3af0" stroke="#3a0a8a" stroke-width="1"/><path d="M8 13.500L14 11.500L18 13L12 15.500Z" fill="#e0c8ff" stroke="#3a0a8a" stroke-width=".8"/><path d="M10 14L21 3" stroke="#000" stroke-width="1.600"/><path d="M22.500 1.500L21.500 7L17 3Z" fill="#ffe020" stroke="#000" stroke-width=".8"/><path d="M11 13L20 4" stroke="#ffe020" stroke-width=".9"/></g><g transform="translate(1889.6,678.6) scale(0.95)"><path d="M6 4C12 1 20 3 20 8C20 13 12 12 12 16C12 20 18 20 20 18L20 21C14 24 6 22 6 17C6 13 14 13 14 9C14 6 9 6 6 8Z" fill="#b890ff" stroke="#3a0a8a" stroke-width="1"/><path d="M2 10H10M2 13H8" stroke="#e0a000" stroke-width="2"/><circle cx="4" cy="11.500" r="2.500" fill="#ffe020" stroke="#806000" stroke-width=".8"/></g><g transform="translate(1889.6,707.1) scale(0.95)"><path d="M2 19L8 8L14 5L18 9L22 12V18L10 22Z" fill="#8a3af0" stroke="#3a0a8a" stroke-width="1.100"/><path d="M8 8L12 12L14 5M12 12L10 22M12 12L22 12" stroke="#3a0a8a" stroke-width=".9" fill="none"/><path d="M8 8L14 5L18 9L12 12Z" fill="#c8a0ff" stroke="#3a0a8a" stroke-width=".8"/></g><g transform="translate(1889.6,734.6) scale(0.95)"><path d="M2 18L10 6L14 5L12 13L22 11V17L8 22Z" fill="#8a3af0" stroke="#3a0a8a" stroke-width="1.100"/><path d="M10 6L8 15L2 18M8 15L22 11M8 15V22" stroke="#3a0a8a" stroke-width=".9" fill="none"/><path d="M10 6L14 5L12 13L8 15Z" fill="#c8a0ff" stroke="#3a0a8a" stroke-width=".8"/></g><g transform="translate(1889.6,762.6) scale(0.95)"><path d="M2 8C8 4 14 10 22 5V10C14 15 8 9 2 13Z" fill="#35d6ee" stroke="#0a1e6e" stroke-width="1"/><path d="M2 13C8 9 14 15 22 10V16C14 21 8 15 2 19Z" fill="#8a3af0" stroke="#3a0a8a" stroke-width="1"/><path d="M2 19C8 15 14 21 22 16V19C14 24 8 18 2 22Z" fill="#5a1ac0" stroke="#3a0a8a" stroke-width="1"/></g><g transform="translate(1889.6,791.6) scale(0.95)"><path d="M3 16L14 4C19 2 23 7 20 11L9 22C4 23 0 19 3 16Z" fill="#35d6ee" stroke="#0a1e6e" stroke-width="1.100"/><ellipse cx="6.500" cy="18.500" rx="4.500" ry="3.500" transform="rotate(-20 6.500 18.500)" fill="#108ab0" stroke="#0a1e6e" stroke-width="1"/></g><g transform="translate(1889.6,826.6) scale(0.95)"><path d="M5 6L14 3L20 6V17L11 22L5 19Z" fill="#35d6ee" stroke="#0a1e6e" stroke-width="1.100"/><path d="M5 6L11 9V22" stroke="#0a1e6e" fill="none"/><path d="M5 6L11 9L11 22L5 19Z" fill="#8a3af0" stroke="#3a0a8a" stroke-width="1"/><path d="M11 9L20 6" stroke="#0a1e6e"/></g><g transform="translate(1889.6,857.1) scale(0.95)"><path d="M3 9L14 3L21 7L10 22L3 18Z" fill="#2040e0" stroke="#0a1e6e" stroke-width="1.200"/><path d="M7 10L14 6L17 8L10 17L7 15Z" fill="#35d6ee" stroke="#0a1e6e" stroke-width="1"/></g><g transform="translate(1889.6,885.6) scale(0.95)"><rect x="3" y="3" width="18" height="19" fill="#8a3af0" stroke="#3a0a8a" stroke-width="1.200"/><path d="M12 3V22" stroke="#35d6ee" stroke-width="4" stroke-dasharray="1.500 1.500"/><path d="M5 6h5M5 9h5M5 12h5M5 15h5M5 18h5" stroke="#000" stroke-width="1"/></g><g transform="translate(1889.6,913.6) scale(0.95)"><path d="M3 6L9 2H21V17L15 22H3Z" fill="#35d6ee" stroke="#0a1e6e" stroke-width="1.100"/><path d="M3 6H15V22M15 6L21 2" stroke="#0a1e6e" fill="none"/><rect x="9" y="7" width="8" height="13" fill="#8a3af0" opacity=".75"/><path d="M5 13H15M12 10L15.500 13L12 16" stroke="#fff" stroke-width="1.400" fill="none"/></g><g transform="translate(1889.6,949.6) scale(0.95)"><path d="M8 4L15 2L21 5V13L14 16L8 13Z" fill="#8a3af0" stroke="#3a0a8a" stroke-width="1.100"/><circle cx="8" cy="16" r="5.500" fill="#8a3af0" stroke="#3a0a8a" stroke-width="1.200"/><circle cx="8" cy="16" r="2.500" fill="#c8a0ff" stroke="#3a0a8a" stroke-width=".8"/><path d="M14 16L21 13V19L14 22Z" fill="#5a1ac0" stroke="#3a0a8a" stroke-width="1"/></g><path d="M1889 84.5H1903" stroke="#fff" stroke-width="2"/><path d="M1890 85.5H1904" stroke="#8e8ea6"/><path d="M1889 131.5H1903" stroke="#fff" stroke-width="2"/><path d="M1890 132.5H1904" stroke="#8e8ea6"/><path d="M1889 259.5H1903" stroke="#fff" stroke-width="2"/><path d="M1890 260.5H1904" stroke="#8e8ea6"/><path d="M1889 337.5H1903" stroke="#fff" stroke-width="2"/><path d="M1890 338.5H1904" stroke="#8e8ea6"/><path d="M1889 385.5H1903" stroke="#fff" stroke-width="2"/><path d="M1890 386.5H1904" stroke="#8e8ea6"/><path d="M1889 431.5H1903" stroke="#fff" stroke-width="2"/><path d="M1890 432.5H1904" stroke="#8e8ea6"/><path d="M1889 596.5H1903" stroke="#fff" stroke-width="2"/><path d="M1890 597.5H1904" stroke="#8e8ea6"/><path d="M1889 642.5H1903" stroke="#fff" stroke-width="2"/><path d="M1890 643.5H1904" stroke="#8e8ea6"/><path d="M1884 820.5H1918" stroke="#8e8ea6"/><path d="M1884 821.5H1918" stroke="#fff"/><path d="M1884 943.5H1918" stroke="#8e8ea6"/><path d="M1884 944.5H1918" stroke="#fff"/><path d="M1909.5 291.5h9l-4.500 5z" fill="#000"/><path d="M1909.5 322.5h9l-4.500 5z" fill="#000"/><path d="M1909.5 369.5h9l-4.500 5z" fill="#000"/><path d="M1909.5 463.5h9l-4.500 5z" fill="#000"/><path d="M1909.5 493.5h9l-4.500 5z" fill="#000"/><path d="M1909.5 550.5h9l-4.500 5z" fill="#000"/><path d="M1909.5 580.5h9l-4.500 5z" fill="#000"/><path d="M1909.5 849.0h9l-4.500 5z" fill="#000"/><path d="M1909.5 971.5h9l-4.500 5z" fill="#000"/><rect x="1861.500" y="1021.500" width="11" height="9" fill="#fff" stroke="#000"/><rect x="1866" y="1026" width="4" height="3" fill="#000"/><path d="M1876 1031h2" stroke="#000" stroke-width="2"/><circle cx="1901" cy="1027" r="5.500" fill="#fff" stroke="#000" stroke-width="1.300"/><path d="M1905 1031l4 4" stroke="#000" stroke-width="2"/><path d="M1893 1033h8" stroke="#000"/><text x="1899.500" y="1030.500" font-size="8" font-weight="bold" font-family="Liberation Serif,serif" fill="#1030d0">i</text></svg>
</body>
</html>
